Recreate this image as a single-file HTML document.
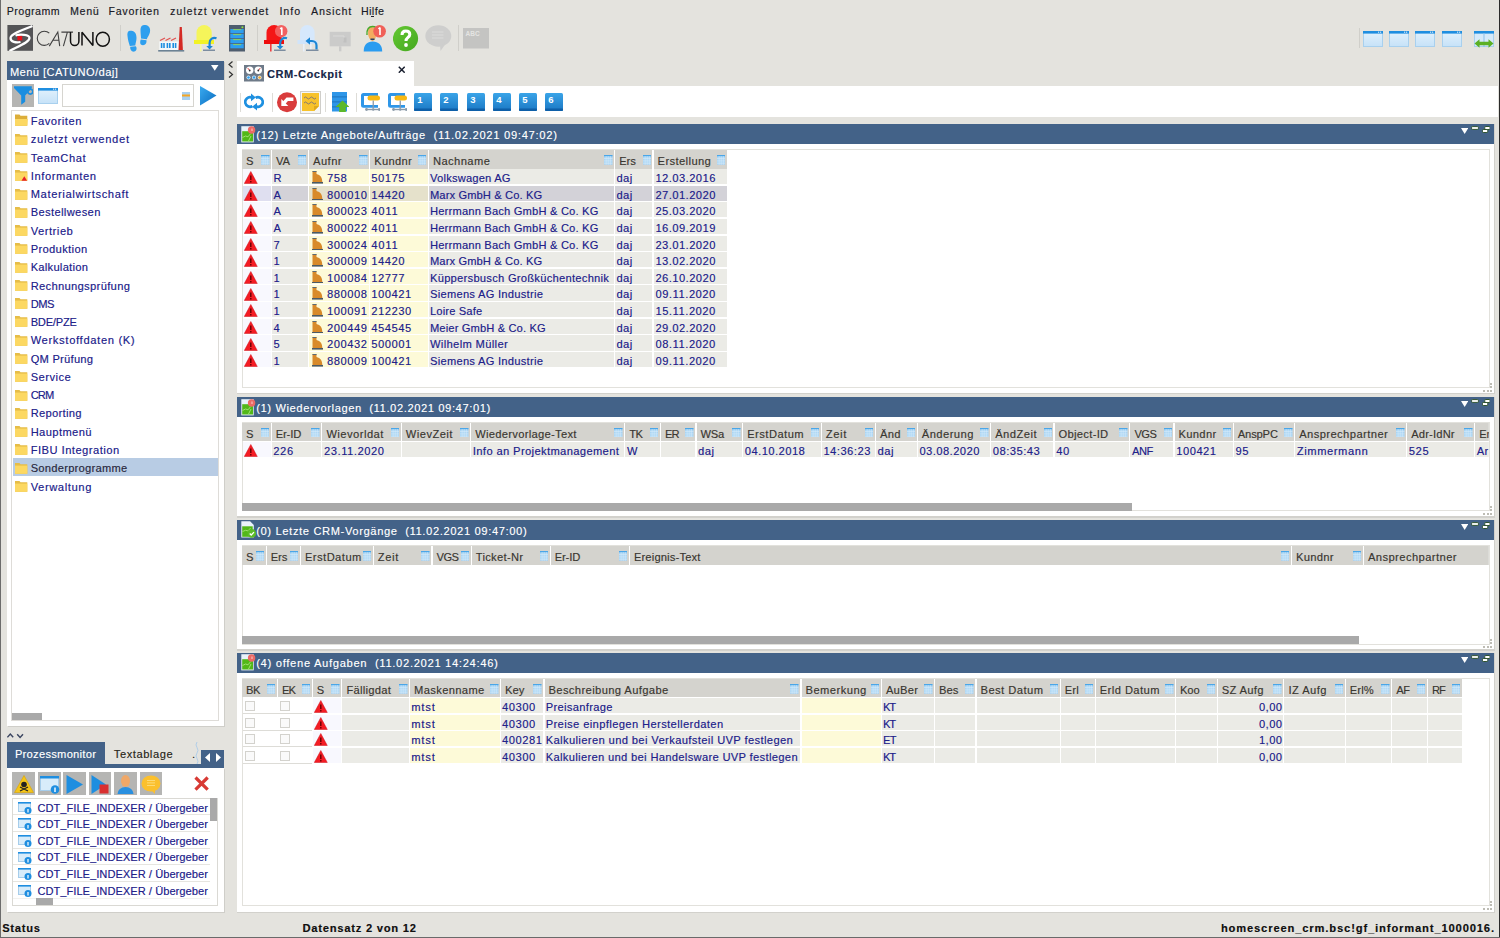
<!DOCTYPE html>
<html><head><meta charset="utf-8"><style>
html,body{margin:0;padding:0;}
body{width:1500px;height:938px;overflow:hidden;position:relative;background:#e4e3de;font-family:'Liberation Sans', sans-serif;}
div,svg{position:absolute;}
.t{white-space:pre;line-height:14px;}
</style></head><body>
<div style="left:0.00px;top:0.00px;width:1.00px;height:938.00px;background:#6c6c6c;"></div>
<div style="left:1499.00px;top:0.00px;width:1.00px;height:938.00px;background:#2a2a2a;"></div>
<div style="left:0.00px;top:937.00px;width:1500.00px;height:1.00px;background:#6a6a6a;"></div>
<div class="t" style="top:4px;font-size:10.5px;color:#1c1c28;letter-spacing:0.533px;left:6.70px;text-shadow:0.4px 0 0 rgba(28,28,40,0.4);">Programm</div>
<div class="t" style="top:4px;font-size:10.5px;color:#1c1c28;letter-spacing:0.782px;left:70.10px;text-shadow:0.4px 0 0 rgba(28,28,40,0.4);">Menü</div>
<div class="t" style="top:4px;font-size:10.5px;color:#1c1c28;letter-spacing:0.839px;left:108.40px;text-shadow:0.4px 0 0 rgba(28,28,40,0.4);">Favoriten</div>
<div class="t" style="top:4px;font-size:10.5px;color:#1c1c28;letter-spacing:1.030px;left:170.10px;text-shadow:0.4px 0 0 rgba(28,28,40,0.4);">zuletzt verwendet</div>
<div class="t" style="top:4px;font-size:10.5px;color:#1c1c28;letter-spacing:1.025px;left:279.40px;text-shadow:0.4px 0 0 rgba(28,28,40,0.4);">Info</div>
<div class="t" style="top:4px;font-size:10.5px;color:#1c1c28;letter-spacing:0.949px;left:311.10px;text-shadow:0.4px 0 0 rgba(28,28,40,0.4);">Ansicht</div>
<div class="t" style="top:4px;font-size:10.5px;color:#1c1c28;letter-spacing:0.510px;left:360.90px;text-shadow:0.4px 0 0 rgba(28,28,40,0.4);">Hilfe</div>
<div style="left:371.30px;top:15.80px;width:2.40px;height:0.90px;background:#1c1c28;"></div>
<svg style="left:7.00px;top:25.00px" width="27" height="26" viewBox="0 0 27 26"><rect x="0.4" y="0" width="25.6" height="25.8" fill="#555557"/>
<path d="M25.5 1 C 15 5, 3.5 9, 3.5 13 C 3.5 17, 9 18, 13.5 17" stroke="#fff" stroke-width="2.3" fill="none"/>
<path d="M8.5 10.5 C 13 9, 22.5 9.5, 22.5 13 C 22.5 17, 12 21, 2.5 26" stroke="#fff" stroke-width="2.3" fill="none"/>
<rect x="10.4" y="11" width="4.8" height="4.4" fill="#e8101a"/></svg>
<svg style="left:35.00px;top:29.80px" width="76" height="18" viewBox="0 0 76 18">
<path d="M14.3 3.2 A 7.1 7.1 0 1 0 14.3 13.4" stroke="#404040" stroke-width="1.1" fill="none"/>
<path d="M14.3 16.1 L22.8 2 L24.7 16.1 M18.2 10.2 L23.6 10.2" stroke="#404040" stroke-width="1.1" fill="none"/>
<path d="M26.4 2.1 L38 2.1 M32.4 2.1 L28.4 16.1" stroke="#404040" stroke-width="1.1" fill="none"/>
<path d="M35.5 2 L35.5 11 A 4.2 4.6 0 0 0 43.9 11 L43.9 2" stroke="#111" stroke-width="1.5" fill="none"/>
<path d="M47 15.6 L47 2.3 L57.9 15.6 L57.9 2" stroke="#111" stroke-width="1.5" fill="none" stroke-linejoin="bevel"/>
<ellipse cx="67.8" cy="9.2" rx="6.6" ry="7" stroke="#111" stroke-width="1.5" fill="none"/></svg>
<div style="left:120.00px;top:25.00px;width:1.00px;height:26.00px;background:#d0cfca;"></div>
<svg style="left:126.00px;top:24.00px" width="25" height="28" viewBox="0 0 25 28"><path d="M1.5 12 C 1 7, 3 6.5, 5.5 6.8 C 9 7.2, 10.5 10, 10.5 14 C 10.5 17, 9.5 19, 9.3 21.5 L 3.8 22 C 3 19, 1.8 16, 1.5 12Z" fill="#2e9fee"/>
<path d="M4.2 22.8 L 9.8 22.3 C 11 23.5, 11 26.5, 8.5 27.5 C 5.5 28.2, 4 26, 4.2 22.8Z" fill="#2e9fee"/>
<path d="M14.5 6 C 14.5 2, 16.5 0.8, 19.5 1 C 23 1.5, 24.5 4, 24 8 C 23.5 11, 21.5 13, 20.8 15.2 L 15 14.6 C 15 12, 14.5 9.5, 14.5 6Z" fill="#2e9fee"/>
<path d="M14.8 15.5 L 20.5 16.2 C 20.8 19, 19.5 21, 17 21.2 C 14.2 21.3, 13.5 18.5, 14.8 15.5Z" fill="#2e9fee"/></svg>
<svg style="left:158.00px;top:26.00px" width="27" height="26" viewBox="0 0 27 26"><rect x="1.3" y="15.5" width="19.5" height="8.5" fill="#f6f8fa"/>
<path d="M2 14.5 l5 -2.5 M7.5 14.5 l5 -2.5 M13 14.5 l5 -2.5" stroke="#e05050" stroke-width="1.2"/>
<rect x="2.8" y="17" width="1.6" height="5" fill="#1e8ee0"/><rect x="5.2" y="17" width="1.6" height="5" fill="#1e8ee0"/>
<rect x="8.6" y="17" width="1.6" height="5" fill="#1e8ee0"/><rect x="11" y="17" width="1.6" height="5" fill="#1e8ee0"/>
<rect x="14.4" y="17" width="1.6" height="5" fill="#1e8ee0"/><rect x="16.8" y="17" width="1.6" height="5" fill="#1e8ee0"/>
<path d="M20.5 24 L21.7 1 H23.8 L24.9 24z" fill="#d42a24"/><rect x="0.2" y="24" width="26" height="1.6" fill="#6c8294"/></svg>
<svg style="left:194.00px;top:25.00px" width="24" height="27" viewBox="0 0 24 27"><path d="M2.5 15 V 7.5 A 7.6 7.5 0 0 1 17.7 7.5 V 15z" fill="#f5f55a"/><rect x="0" y="15" width="20" height="4" fill="#f2f224"/><rect x="6" y="19" width="1.6" height="7.5" fill="#f8f8a0"/><path d="M15.6 22.5 V 18 A 5 5 0 0 1 22.5 13.2" stroke="#1b86d6" stroke-width="2.2" fill="none"/><path d="M12.3 21 h6.6 l-3.3 3.6z" fill="#1b86d6"/><rect x="9" y="24.5" width="12" height="1.5" fill="#7c8da0"/></svg>
<svg style="left:229.00px;top:25.00px" width="16" height="27" viewBox="0 0 16 27"><rect width="16" height="26.5" fill="#4e5d6e"/><rect x="1.3" y="4" width="13.4" height="4.3" fill="#2d9ef0"/><rect x="1.3" y="9" width="13.4" height="4.3" fill="#2d9ef0"/><rect x="1.3" y="14" width="13.4" height="4.3" fill="#2d9ef0"/><rect x="1.3" y="19" width="13.4" height="4.3" fill="#2d9ef0"/>
<rect x="4.2" y="4.2" width="8" height="0.9" fill="#9ad84a"/><rect x="4.2" y="9.2" width="8" height="0.9" fill="#9ad84a"/><rect x="4.2" y="14.2" width="8" height="0.9" fill="#9ad84a"/><rect x="4.2" y="19.2" width="8" height="0.9" fill="#9ad84a"/><circle cx="13.4" cy="2.3" r="1" fill="#8ee040"/></svg>
<div style="left:257.00px;top:25.00px;width:1.00px;height:26.00px;background:#d0cfca;"></div>
<svg style="left:264.00px;top:25.00px" width="25" height="27" viewBox="0 0 25 27"><path d="M2.5 15 V 7.5 A 7.6 7.5 0 0 1 17.7 7.5 V 15z" fill="#f41616"/><rect x="0" y="15" width="20" height="4" fill="#ee0c0c"/><rect x="6" y="19" width="1.6" height="7.5" fill="#f04040"/><circle cx="17.2" cy="6.2" r="6.2" fill="#f26060"/><path d="M17.8 2.5 v7.5 M16.2 4 l1.6 -1.5" stroke="#fff" stroke-width="1.6" fill="none"/>
<path d="M16.2 22.5 V 18 A 5 5 0 0 1 23 13.2" stroke="#1b86d6" stroke-width="2.2" fill="none"/><path d="M12.8 21 h6.6 l-3.3 3.6z" fill="#1b86d6"/><rect x="10" y="24.5" width="11.6" height="1.5" fill="#7c8da0"/></svg>
<svg style="left:297.00px;top:25.00px" width="22" height="27" viewBox="0 0 22 27"><path d="M3 15 V 7.5 A 7.3 7.5 0 0 1 17.6 7.5 V 15z" fill="#d6e8fc"/><rect x="0.5" y="15" width="20" height="4" fill="#d0e4fa"/><rect x="6" y="19" width="1.6" height="7.5" fill="#e8f0fa"/><rect x="13" y="19" width="1.6" height="6" fill="#e8f0fa"/>
<path d="M19.5 24.5 V 20.5 A 4.5 4.5 0 0 0 15 16 H 12" stroke="#1b86d6" stroke-width="2.2" fill="none"/><path d="M8.5 16 l4.5 -3.8 v7.6z" fill="#1b86d6"/><rect x="9" y="24.5" width="12.5" height="1.5" fill="#7c8da0"/></svg>
<svg style="left:329.00px;top:25.00px" width="23" height="27" viewBox="0 0 23 27"><rect x="0.7" y="6.8" width="21" height="14.5" fill="#cbcbca"/><rect x="10" y="21.3" width="2.4" height="5" fill="#cbcbca"/><path d="M4 11 h11 v5" stroke="#dadad9" stroke-width="1" fill="none"/><rect x="14.5" y="12.5" width="3" height="5" fill="#c0c0bf"/></svg>
<svg style="left:363.00px;top:25.00px" width="24" height="27" viewBox="0 0 24 27"><path d="M0.7 26.4 C 0.7 20, 4 16.6, 9.7 16.6 C 15.4 16.6, 19.2 20, 19.2 26.4z" fill="#2a9cf0"/><path d="M5 8 C 5 3, 7 2, 9 2 C 12 2, 13.5 4, 13.5 8 C 13.5 12, 12 15, 9.5 16.3 C 7 15, 5 12, 5 8Z" fill="#f2ac60"/>
<path d="M4 10 C 3.5 4, 6 1.5, 9.5 1.5 C 12 1.5, 14 3, 14.5 5" stroke="#48a828" stroke-width="1.4" fill="none"/><rect x="7.5" y="13.5" width="4" height="1.5" fill="#2a4060"/>
<circle cx="16.6" cy="6.3" r="6.3" fill="#f06058"/><path d="M17 2.5 v7.5 M15.5 4 l1.5 -1.5" stroke="#fff" stroke-width="1.6" fill="none"/></svg>
<svg style="left:393.00px;top:25.00px" width="26" height="27" viewBox="0 0 26 27"><defs><linearGradient id="gq" x1="0" y1="0" x2="1" y2="1"><stop offset="0" stop-color="#64c832"/><stop offset="1" stop-color="#45a820"/></linearGradient></defs><circle cx="12.5" cy="13.6" r="12.6" fill="url(#gq)"/>
<path d="M9 10 C 9 7, 10.5 6, 12.8 6 C 15.3 6, 16.8 7.3, 16.8 9.5 C 16.8 12.5, 13 12.5, 13 16" stroke="#fff" stroke-width="3" fill="none"/><circle cx="13" cy="20" r="1.9" fill="#fff"/></svg>
<svg style="left:425.00px;top:25.00px" width="27" height="27" viewBox="0 0 27 27"><ellipse cx="13.3" cy="11" rx="13" ry="10.7" fill="#cececd"/><path d="M15 20 L 15.5 26 L 22 17z" fill="#cececd"/><rect x="7" y="6.5" width="11.5" height="1" fill="#dcdcdb"/><rect x="7" y="9.5" width="11.5" height="1" fill="#dcdcdb"/><rect x="7" y="12.5" width="11.5" height="1" fill="#dcdcdb"/></svg>
<div style="left:458.30px;top:25.00px;width:1.00px;height:26.00px;background:#d0cfca;"></div>
<svg style="left:463.00px;top:28.00px" width="26" height="21" viewBox="0 0 26 21"><rect width="26" height="20.5" fill="#c4c4c2"/><text x="2.5" y="8.3" font-size="6.5" fill="#e4e4e2" font-family="Liberation Sans" font-weight="bold">ABC</text></svg>
<div style="left:1358.50px;top:28.00px;width:1.00px;height:20.00px;background:#d0cfca;"></div>
<svg style="left:1363.00px;top:30.50px" width="20" height="16" viewBox="0 0 20 16"><defs><linearGradient id="wg" x1="0" y1="0" x2="0" y2="1"><stop offset="0" stop-color="#e2f1fc"/><stop offset="1" stop-color="#c6e2f8"/></linearGradient></defs><rect x="0.5" y="0.5" width="19" height="15" fill="url(#wg)" stroke="#a8d0ee"/><rect x="0" y="0" width="20" height="2.6" fill="#1f8ee0"/><rect x="15" y="0.6" width="1.2" height="1.2" fill="#cfe6f8"/><rect x="17" y="0.6" width="1.2" height="1.2" fill="#cfe6f8"/></svg>
<svg style="left:1389.00px;top:30.50px" width="20" height="16" viewBox="0 0 20 16"><defs><linearGradient id="wg" x1="0" y1="0" x2="0" y2="1"><stop offset="0" stop-color="#e2f1fc"/><stop offset="1" stop-color="#c6e2f8"/></linearGradient></defs><rect x="0.5" y="0.5" width="19" height="15" fill="url(#wg)" stroke="#a8d0ee"/><rect x="0" y="0" width="20" height="2.6" fill="#1f8ee0"/><rect x="15" y="0.6" width="1.2" height="1.2" fill="#cfe6f8"/><rect x="17" y="0.6" width="1.2" height="1.2" fill="#cfe6f8"/></svg>
<svg style="left:1415.00px;top:30.50px" width="20" height="16" viewBox="0 0 20 16"><defs><linearGradient id="wg" x1="0" y1="0" x2="0" y2="1"><stop offset="0" stop-color="#e2f1fc"/><stop offset="1" stop-color="#c6e2f8"/></linearGradient></defs><rect x="0.5" y="0.5" width="19" height="15" fill="url(#wg)" stroke="#a8d0ee"/><rect x="0" y="0" width="20" height="2.6" fill="#1f8ee0"/><rect x="15" y="0.6" width="1.2" height="1.2" fill="#cfe6f8"/><rect x="17" y="0.6" width="1.2" height="1.2" fill="#cfe6f8"/></svg>
<svg style="left:1442.00px;top:30.50px" width="20" height="16" viewBox="0 0 20 16"><defs><linearGradient id="wg" x1="0" y1="0" x2="0" y2="1"><stop offset="0" stop-color="#e2f1fc"/><stop offset="1" stop-color="#c6e2f8"/></linearGradient></defs><rect x="0.5" y="0.5" width="19" height="15" fill="url(#wg)" stroke="#a8d0ee"/><rect x="0" y="0" width="20" height="2.6" fill="#1f8ee0"/><rect x="15" y="0.6" width="1.2" height="1.2" fill="#cfe6f8"/><rect x="17" y="0.6" width="1.2" height="1.2" fill="#cfe6f8"/></svg>
<svg style="left:1474.00px;top:30.50px" width="20" height="18" viewBox="0 0 20 18"><rect x="0.5" y="0.5" width="19" height="15" fill="#d6eafa" stroke="#a8d0ee"/><rect x="0" y="0" width="20" height="2.6" fill="#1f8ee0"/><rect x="9.5" y="2" width="1" height="14" fill="#8cc0ea"/>
<path d="M0.5 12.5 l5 -4.3 v2.6 h9 v-2.6 l5 4.3 l-5 4.3 v-2.6 h-9 v2.6z" fill="#5bb025"/></svg>
<div style="left:7.00px;top:61.00px;width:217.00px;height:665.00px;background:#fff;box-shadow:1px 1px 0 #cfcec9;"></div>
<div style="left:7.00px;top:61.00px;width:217.00px;height:19.00px;background:#436288;"></div>
<div class="t" style="top:65px;font-size:11px;color:#fff;letter-spacing:0.488px;left:9.90px;text-shadow:0.4px 0 0 rgba(255,255,255,0.4);">Menü [CATUNO/daj]</div>
<svg style="left:211.00px;top:65.00px" width="8" height="6" viewBox="0 0 8 6"><path d="M0 0 h7.5 l-3.75 5.7z" fill="#fff"/></svg>
<div style="left:12.00px;top:84.00px;width:22.00px;height:23.00px;background:#b5b5b3;"></div>
<svg style="left:14.00px;top:86.00px" width="19" height="19" viewBox="0 0 19 19"><path d="M0 0.3 H17.8 V2 L11.2 9.5 V15.8 L7.2 18.8 V9.5 L0 2z" fill="#1a8ee0"/><circle cx="16.3" cy="5.6" r="2.5" stroke="#1a8ee0" stroke-width="1.6" fill="none"/></svg>
<svg style="left:38.20px;top:88.00px" width="20" height="16" viewBox="0 0 20 16"><defs><linearGradient id="wg" x1="0" y1="0" x2="0" y2="1"><stop offset="0" stop-color="#e2f1fc"/><stop offset="1" stop-color="#c6e2f8"/></linearGradient></defs><rect x="0.5" y="0.5" width="19" height="15" fill="url(#wg)" stroke="#a8d0ee"/><rect x="0" y="0" width="20" height="2.6" fill="#1f8ee0"/><rect x="15" y="0.6" width="1.2" height="1.2" fill="#cfe6f8"/><rect x="17" y="0.6" width="1.2" height="1.2" fill="#cfe6f8"/></svg>
<div style="left:62.00px;top:84.00px;width:131.50px;height:22.70px;background:#fff;box-shadow: inset 0 0 0 1px #d6d5d0;"></div>
<svg style="left:182.00px;top:91.50px" width="8" height="8.5" viewBox="0 0 8 8.5"><rect width="8" height="8.5" fill="#a8d0f0"/><rect y="2.5" width="8" height="2" fill="#f5a623"/></svg>
<svg style="left:199.50px;top:86.00px" width="17" height="20" viewBox="0 0 17 20"><defs><linearGradient id="pg" x1="0" y1="0" x2="1" y2="1"><stop offset="0" stop-color="#3aabf0"/><stop offset="1" stop-color="#0a6cc0"/></linearGradient></defs><path d="M0 0 L16.5 9.5 L0 19.5z" fill="url(#pg)"/></svg>
<div style="left:11.00px;top:110.00px;width:208.00px;height:611.00px;background:#fff;box-shadow: inset 0 0 0 1px #dedcd8;"></div>
<svg style="left:15.00px;top:114.40px" width="13" height="12" viewBox="0 0 13 12"><path d="M0 0.5 h4.5 l1 1.3 h6.8 v10 h-12.3z" fill="#dcae3a"/><path d="M0 5 h12.8 l-0.6 6.8 h-12.2z" fill="#fcd862"/></svg>
<div class="t" style="top:114.0px;font-size:11px;color:#22228a;letter-spacing:0.594px;left:30.70px;text-shadow:0.4px 0 0 rgba(34,34,138,0.4);">Favoriten</div>
<svg style="left:15.00px;top:132.68px" width="13" height="12" viewBox="0 0 13 12"><path d="M0 1 h4.5 l1 1.3 h6.8 v9.5 h-12.3z" fill="#e6bd48"/><path d="M0 3.6 h12.3 v8.2 h-12.3z" fill="#fcd862"/></svg>
<div class="t" style="top:132.28px;font-size:11px;color:#22228a;letter-spacing:0.794px;left:30.70px;text-shadow:0.4px 0 0 rgba(34,34,138,0.4);">zuletzt verwendet</div>
<svg style="left:15.00px;top:150.96px" width="13" height="12" viewBox="0 0 13 12"><path d="M0 1 h4.5 l1 1.3 h6.8 v9.5 h-12.3z" fill="#e6bd48"/><path d="M0 3.6 h12.3 v8.2 h-12.3z" fill="#fcd862"/></svg>
<div class="t" style="top:150.56px;font-size:11px;color:#22228a;letter-spacing:0.676px;left:30.70px;text-shadow:0.4px 0 0 rgba(34,34,138,0.4);">TeamChat</div>
<svg style="left:15.00px;top:169.24px" width="13" height="12" viewBox="0 0 13 12"><path d="M0 1 h4.5 l1 1.3 h6.8 v9.5 h-12.3z" fill="#e6bd48"/><path d="M0 3.6 h12.3 v8.2 h-12.3z" fill="#fcd862"/><path d="M6.5 11.8 l2.8 -4.5 l2.8 4.5z" fill="#e8202a"/></svg>
<div class="t" style="top:168.84px;font-size:11px;color:#22228a;letter-spacing:0.658px;left:30.70px;text-shadow:0.4px 0 0 rgba(34,34,138,0.4);">Informanten</div>
<svg style="left:15.00px;top:187.52px" width="13" height="12" viewBox="0 0 13 12"><path d="M0 1 h4.5 l1 1.3 h6.8 v9.5 h-12.3z" fill="#e6bd48"/><path d="M0 3.6 h12.3 v8.2 h-12.3z" fill="#fcd862"/></svg>
<div class="t" style="top:187.12px;font-size:11px;color:#22228a;letter-spacing:0.710px;left:30.70px;text-shadow:0.4px 0 0 rgba(34,34,138,0.4);">Materialwirtschaft</div>
<svg style="left:15.00px;top:205.80px" width="13" height="12" viewBox="0 0 13 12"><path d="M0 1 h4.5 l1 1.3 h6.8 v9.5 h-12.3z" fill="#e6bd48"/><path d="M0 3.6 h12.3 v8.2 h-12.3z" fill="#fcd862"/></svg>
<div class="t" style="top:205.4px;font-size:11px;color:#22228a;letter-spacing:0.434px;left:30.70px;text-shadow:0.4px 0 0 rgba(34,34,138,0.4);">Bestellwesen</div>
<svg style="left:15.00px;top:224.08px" width="13" height="12" viewBox="0 0 13 12"><path d="M0 1 h4.5 l1 1.3 h6.8 v9.5 h-12.3z" fill="#e6bd48"/><path d="M0 3.6 h12.3 v8.2 h-12.3z" fill="#fcd862"/></svg>
<div class="t" style="top:223.68px;font-size:11px;color:#22228a;letter-spacing:0.586px;left:30.70px;text-shadow:0.4px 0 0 rgba(34,34,138,0.4);">Vertrieb</div>
<svg style="left:15.00px;top:242.36px" width="13" height="12" viewBox="0 0 13 12"><path d="M0 1 h4.5 l1 1.3 h6.8 v9.5 h-12.3z" fill="#e6bd48"/><path d="M0 3.6 h12.3 v8.2 h-12.3z" fill="#fcd862"/></svg>
<div class="t" style="top:241.96px;font-size:11px;color:#22228a;letter-spacing:0.423px;left:30.70px;text-shadow:0.4px 0 0 rgba(34,34,138,0.4);">Produktion</div>
<svg style="left:15.00px;top:260.64px" width="13" height="12" viewBox="0 0 13 12"><path d="M0 1 h4.5 l1 1.3 h6.8 v9.5 h-12.3z" fill="#e6bd48"/><path d="M0 3.6 h12.3 v8.2 h-12.3z" fill="#fcd862"/></svg>
<div class="t" style="top:260.24px;font-size:11px;color:#22228a;letter-spacing:0.332px;left:30.70px;text-shadow:0.4px 0 0 rgba(34,34,138,0.4);">Kalkulation</div>
<svg style="left:15.00px;top:278.92px" width="13" height="12" viewBox="0 0 13 12"><path d="M0 1 h4.5 l1 1.3 h6.8 v9.5 h-12.3z" fill="#e6bd48"/><path d="M0 3.6 h12.3 v8.2 h-12.3z" fill="#fcd862"/></svg>
<div class="t" style="top:278.52px;font-size:11px;color:#22228a;letter-spacing:0.410px;left:30.70px;text-shadow:0.4px 0 0 rgba(34,34,138,0.4);">Rechnungsprüfung</div>
<svg style="left:15.00px;top:297.20px" width="13" height="12" viewBox="0 0 13 12"><path d="M0 1 h4.5 l1 1.3 h6.8 v9.5 h-12.3z" fill="#e6bd48"/><path d="M0 3.6 h12.3 v8.2 h-12.3z" fill="#fcd862"/></svg>
<div class="t" style="top:296.8px;font-size:11px;color:#22228a;letter-spacing:-0.338px;left:30.70px;text-shadow:0.4px 0 0 rgba(34,34,138,0.4);">DMS</div>
<svg style="left:15.00px;top:315.48px" width="13" height="12" viewBox="0 0 13 12"><path d="M0 1 h4.5 l1 1.3 h6.8 v9.5 h-12.3z" fill="#e6bd48"/><path d="M0 3.6 h12.3 v8.2 h-12.3z" fill="#fcd862"/></svg>
<div class="t" style="top:315.08000000000004px;font-size:11px;color:#22228a;letter-spacing:-0.164px;left:30.70px;text-shadow:0.4px 0 0 rgba(34,34,138,0.4);">BDE/PZE</div>
<svg style="left:15.00px;top:333.76px" width="13" height="12" viewBox="0 0 13 12"><path d="M0 1 h4.5 l1 1.3 h6.8 v9.5 h-12.3z" fill="#e6bd48"/><path d="M0 3.6 h12.3 v8.2 h-12.3z" fill="#fcd862"/></svg>
<div class="t" style="top:333.36px;font-size:11px;color:#22228a;letter-spacing:0.738px;left:30.70px;text-shadow:0.4px 0 0 rgba(34,34,138,0.4);">Werkstoffdaten (K)</div>
<svg style="left:15.00px;top:352.04px" width="13" height="12" viewBox="0 0 13 12"><path d="M0 1 h4.5 l1 1.3 h6.8 v9.5 h-12.3z" fill="#e6bd48"/><path d="M0 3.6 h12.3 v8.2 h-12.3z" fill="#fcd862"/></svg>
<div class="t" style="top:351.64px;font-size:11px;color:#22228a;letter-spacing:0.326px;left:30.70px;text-shadow:0.4px 0 0 rgba(34,34,138,0.4);">QM Prüfung</div>
<svg style="left:15.00px;top:370.32px" width="13" height="12" viewBox="0 0 13 12"><path d="M0 1 h4.5 l1 1.3 h6.8 v9.5 h-12.3z" fill="#e6bd48"/><path d="M0 3.6 h12.3 v8.2 h-12.3z" fill="#fcd862"/></svg>
<div class="t" style="top:369.92px;font-size:11px;color:#22228a;letter-spacing:0.542px;left:30.70px;text-shadow:0.4px 0 0 rgba(34,34,138,0.4);">Service</div>
<svg style="left:15.00px;top:388.60px" width="13" height="12" viewBox="0 0 13 12"><path d="M0 1 h4.5 l1 1.3 h6.8 v9.5 h-12.3z" fill="#e6bd48"/><path d="M0 3.6 h12.3 v8.2 h-12.3z" fill="#fcd862"/></svg>
<div class="t" style="top:388.20000000000005px;font-size:11px;color:#22228a;letter-spacing:-0.780px;left:30.70px;text-shadow:0.4px 0 0 rgba(34,34,138,0.4);">CRM</div>
<svg style="left:15.00px;top:406.88px" width="13" height="12" viewBox="0 0 13 12"><path d="M0 1 h4.5 l1 1.3 h6.8 v9.5 h-12.3z" fill="#e6bd48"/><path d="M0 3.6 h12.3 v8.2 h-12.3z" fill="#fcd862"/></svg>
<div class="t" style="top:406.48px;font-size:11px;color:#22228a;letter-spacing:0.377px;left:30.70px;text-shadow:0.4px 0 0 rgba(34,34,138,0.4);">Reporting</div>
<svg style="left:15.00px;top:425.16px" width="13" height="12" viewBox="0 0 13 12"><path d="M0 1 h4.5 l1 1.3 h6.8 v9.5 h-12.3z" fill="#e6bd48"/><path d="M0 3.6 h12.3 v8.2 h-12.3z" fill="#fcd862"/></svg>
<div class="t" style="top:424.76px;font-size:11px;color:#22228a;letter-spacing:0.475px;left:30.70px;text-shadow:0.4px 0 0 rgba(34,34,138,0.4);">Hauptmenü</div>
<svg style="left:15.00px;top:443.44px" width="13" height="12" viewBox="0 0 13 12"><path d="M0 1 h4.5 l1 1.3 h6.8 v9.5 h-12.3z" fill="#e6bd48"/><path d="M0 3.6 h12.3 v8.2 h-12.3z" fill="#fcd862"/></svg>
<div class="t" style="top:443.04px;font-size:11px;color:#22228a;letter-spacing:0.549px;left:30.70px;text-shadow:0.4px 0 0 rgba(34,34,138,0.4);">FIBU Integration</div>
<div style="left:12.50px;top:458.22px;width:205.50px;height:17.70px;background:#b8cce4;"></div>
<svg style="left:15.00px;top:461.72px" width="13" height="12" viewBox="0 0 13 12"><path d="M0 1 h4.5 l1 1.3 h6.8 v9.5 h-12.3z" fill="#e6bd48"/><path d="M0 3.6 h12.3 v8.2 h-12.3z" fill="#fcd862"/></svg>
<div class="t" style="top:461.32000000000005px;font-size:11px;color:#2a2a40;letter-spacing:0.331px;left:30.70px;text-shadow:0.4px 0 0 rgba(42,42,64,0.4);">Sonderprogramme</div>
<svg style="left:15.00px;top:480.00px" width="13" height="12" viewBox="0 0 13 12"><path d="M0 1 h4.5 l1 1.3 h6.8 v9.5 h-12.3z" fill="#e6bd48"/><path d="M0 3.6 h12.3 v8.2 h-12.3z" fill="#fcd862"/></svg>
<div class="t" style="top:479.6px;font-size:11px;color:#22228a;letter-spacing:0.682px;left:30.70px;text-shadow:0.4px 0 0 rgba(34,34,138,0.4);">Verwaltung</div>
<div style="left:12.20px;top:713.20px;width:30.00px;height:7.00px;background:#a9a9a9;"></div>
<svg style="left:7.00px;top:732.00px" width="17" height="7" viewBox="0 0 17 7"><path d="M0.4 5.3 l2.9 -3.3 l2.9 3.3" stroke="#3a4560" stroke-width="1.4" fill="none"/><path d="M10.2 2.2 l2.9 3.3 l2.9 -3.3" stroke="#3a4560" stroke-width="1.4" fill="none"/></svg>
<div style="left:7.00px;top:768.00px;width:217.00px;height:144.00px;background:#fff;box-shadow:1px 1px 0 #cfcec9;"></div>
<div style="left:6.70px;top:741.80px;width:98.00px;height:26.20px;background:#436288;"></div>
<div style="left:7.00px;top:763.60px;width:217.00px;height:4.40px;background:#436288;"></div>
<div class="t" style="top:746.5px;font-size:11px;color:#fff;letter-spacing:0.355px;left:14.90px;text-shadow:0.4px 0 0 rgba(255,255,255,0.4);">Prozessmonitor</div>
<div class="t" style="top:747px;font-size:11px;color:#2b2820;letter-spacing:0.610px;left:113.80px;text-shadow:0.4px 0 0 rgba(43,40,32,0.4);">Textablage</div>
<div class="t" style="top:747px;font-size:11px;color:#2b2820;left:191.90px;text-shadow:0.4px 0 0 rgba(43,40,32,0.4);">.</div>
<svg style="left:195.00px;top:742.00px" width="4" height="22" viewBox="0 0 4 22"><path d="M2 0 q-2 3 0 5.5 q2 3 0 5.5 q-2 3 0 5.5 q2 3 0 5.5" stroke="#9ac4ec" stroke-width="0.7" fill="none"/></svg>
<div style="left:201.00px;top:750.00px;width:23.00px;height:18.00px;background:#436288;"></div>
<svg style="left:204.50px;top:753.00px" width="17" height="9" viewBox="0 0 17 9"><path d="M0 4.5 l5 -4.5 v9z" fill="#fff"/><path d="M16 4.5 l-5 -4.5 v9z" fill="#fff"/></svg>
<div style="left:12.20px;top:772.00px;width:22.50px;height:23.00px;background:#b5b5b3;"></div>
<div style="left:38.10px;top:772.00px;width:22.50px;height:23.00px;background:#b5b5b3;"></div>
<div style="left:63.00px;top:772.00px;width:22.50px;height:23.00px;background:#b5b5b3;"></div>
<div style="left:88.70px;top:772.00px;width:22.50px;height:23.00px;background:#b5b5b3;"></div>
<div style="left:114.10px;top:772.00px;width:22.50px;height:23.00px;background:#b5b5b3;"></div>
<div style="left:139.50px;top:772.00px;width:22.50px;height:23.00px;background:#b5b5b3;"></div>
<svg style="left:13.50px;top:775.00px" width="20" height="18" viewBox="0 0 20 18"><path d="M10 0.5 L19.5 17.5 H0.5z" fill="#f5c518" stroke="#d9a300" stroke-width="0.6"/><circle cx="10" cy="9.5" r="2.8" fill="#222"/><path d="M6 12 l8 4 M14 12 l-8 4" stroke="#222" stroke-width="1.2"/></svg>
<svg style="left:39.50px;top:775.50px" width="20" height="18" viewBox="0 0 20 18"><rect x="0.5" y="0.5" width="18" height="14" fill="#d8ecfa" stroke="#a6cdeb"/><rect width="19" height="2.5" fill="#1f8ee0"/><circle cx="15" cy="13.5" r="4.3" fill="#1e8ee0"/><rect x="14.3" y="11.5" width="1.4" height="4.5" fill="#fff"/></svg>
<svg style="left:66.00px;top:774.50px" width="18" height="19" viewBox="0 0 18 19"><path d="M0.5 0 L17 9.5 L0.5 19z" fill="#1e8ee0"/></svg>
<svg style="left:91.00px;top:774.50px" width="19" height="19" viewBox="0 0 19 19"><path d="M0.5 0 L15 9.5 L0.5 19z" fill="#1e8ee0"/><rect x="8.5" y="9.5" width="9" height="9" fill="#d93030"/></svg>
<svg style="left:117.00px;top:774.00px" width="17" height="20" viewBox="0 0 17 20"><ellipse cx="8.5" cy="7" rx="4.5" ry="6" fill="#f0a868"/><path d="M0.5 20 a8 7 0 0 1 16 0z" fill="#2a90e0"/></svg>
<svg style="left:141.00px;top:774.50px" width="20" height="19" viewBox="0 0 20 19"><ellipse cx="10" cy="8.5" rx="9.5" ry="8" fill="#fbc02d"/><path d="M10 15 l4 4 l0 -5z" fill="#fbc02d"/><rect x="6" y="5" width="8" height="0.8" fill="#fde28a"/><rect x="6" y="7.5" width="8" height="0.8" fill="#fde28a"/><rect x="6" y="10" width="8" height="0.8" fill="#fde28a"/></svg>
<svg style="left:193.80px;top:775.90px" width="15.2" height="15.2" viewBox="0 0 15.2 15.2"><path d="M1.5 1.5 L13.7 13.7 M13.7 1.5 L1.5 13.7" stroke="#d83a34" stroke-width="3.2"/></svg>
<div style="left:12.20px;top:797.70px;width:206.00px;height:108.00px;background:#fff;box-shadow: inset 0 0 0 1px #dad9d4;"></div>
<div style="left:0;top:0;width:1500px;height:938px;clip-path:inset(798.5px 1289.6px 39.60000000000002px 13px)">
<svg style="left:18.00px;top:801.80px" width="14" height="12" viewBox="0 0 14 12"><rect x="0.5" y="0.5" width="12" height="9" fill="#d8ecfa" stroke="#a6cdeb"/><rect width="13" height="1.6" fill="#1f8ee0"/><circle cx="10" cy="8.5" r="3.5" fill="#1e8ee0"/><rect x="9.4" y="7" width="1.2" height="3.5" fill="#fff"/></svg>
<div style="left:13.00px;top:814.30px;width:197.40px;height:1.00px;background:#e6e5e0;"></div>
<div class="t" style="top:800.5px;font-size:11px;color:#22228a;letter-spacing:0.085px;left:37.40px;text-shadow:0.4px 0 0 rgba(34,34,138,0.4);">CDT_FILE_INDEXER / Übergeber</div>
<svg style="left:18.00px;top:818.46px" width="14" height="12" viewBox="0 0 14 12"><rect x="0.5" y="0.5" width="12" height="9" fill="#d8ecfa" stroke="#a6cdeb"/><rect width="13" height="1.6" fill="#1f8ee0"/><circle cx="10" cy="8.5" r="3.5" fill="#1e8ee0"/><rect x="9.4" y="7" width="1.2" height="3.5" fill="#fff"/></svg>
<div style="left:13.00px;top:830.96px;width:197.40px;height:1.00px;background:#e6e5e0;"></div>
<div class="t" style="top:817.16px;font-size:11px;color:#22228a;letter-spacing:0.085px;left:37.40px;text-shadow:0.4px 0 0 rgba(34,34,138,0.4);">CDT_FILE_INDEXER / Übergeber</div>
<svg style="left:18.00px;top:835.12px" width="14" height="12" viewBox="0 0 14 12"><rect x="0.5" y="0.5" width="12" height="9" fill="#d8ecfa" stroke="#a6cdeb"/><rect width="13" height="1.6" fill="#1f8ee0"/><circle cx="10" cy="8.5" r="3.5" fill="#1e8ee0"/><rect x="9.4" y="7" width="1.2" height="3.5" fill="#fff"/></svg>
<div style="left:13.00px;top:847.62px;width:197.40px;height:1.00px;background:#e6e5e0;"></div>
<div class="t" style="top:833.82px;font-size:11px;color:#22228a;letter-spacing:0.085px;left:37.40px;text-shadow:0.4px 0 0 rgba(34,34,138,0.4);">CDT_FILE_INDEXER / Übergeber</div>
<svg style="left:18.00px;top:851.78px" width="14" height="12" viewBox="0 0 14 12"><rect x="0.5" y="0.5" width="12" height="9" fill="#d8ecfa" stroke="#a6cdeb"/><rect width="13" height="1.6" fill="#1f8ee0"/><circle cx="10" cy="8.5" r="3.5" fill="#1e8ee0"/><rect x="9.4" y="7" width="1.2" height="3.5" fill="#fff"/></svg>
<div style="left:13.00px;top:864.28px;width:197.40px;height:1.00px;background:#e6e5e0;"></div>
<div class="t" style="top:850.48px;font-size:11px;color:#22228a;letter-spacing:0.085px;left:37.40px;text-shadow:0.4px 0 0 rgba(34,34,138,0.4);">CDT_FILE_INDEXER / Übergeber</div>
<svg style="left:18.00px;top:868.44px" width="14" height="12" viewBox="0 0 14 12"><rect x="0.5" y="0.5" width="12" height="9" fill="#d8ecfa" stroke="#a6cdeb"/><rect width="13" height="1.6" fill="#1f8ee0"/><circle cx="10" cy="8.5" r="3.5" fill="#1e8ee0"/><rect x="9.4" y="7" width="1.2" height="3.5" fill="#fff"/></svg>
<div style="left:13.00px;top:880.94px;width:197.40px;height:1.00px;background:#e6e5e0;"></div>
<div class="t" style="top:867.14px;font-size:11px;color:#22228a;letter-spacing:0.085px;left:37.40px;text-shadow:0.4px 0 0 rgba(34,34,138,0.4);">CDT_FILE_INDEXER / Übergeber</div>
<svg style="left:18.00px;top:885.10px" width="14" height="12" viewBox="0 0 14 12"><rect x="0.5" y="0.5" width="12" height="9" fill="#d8ecfa" stroke="#a6cdeb"/><rect width="13" height="1.6" fill="#1f8ee0"/><circle cx="10" cy="8.5" r="3.5" fill="#1e8ee0"/><rect x="9.4" y="7" width="1.2" height="3.5" fill="#fff"/></svg>
<div style="left:13.00px;top:897.60px;width:197.40px;height:1.00px;background:#e6e5e0;"></div>
<div class="t" style="top:883.8px;font-size:11px;color:#22228a;letter-spacing:0.085px;left:37.40px;text-shadow:0.4px 0 0 rgba(34,34,138,0.4);">CDT_FILE_INDEXER / Übergeber</div>
</div>
<div style="left:210.40px;top:798.30px;width:6.70px;height:23.00px;background:#a9a9a9;"></div>
<div style="left:36.40px;top:898.20px;width:16.40px;height:7.00px;background:#a9a9a9;"></div>
<svg style="left:228.00px;top:61.00px" width="6" height="17" viewBox="0 0 6 17"><path d="M4.5 0.5 l-3.5 3 l3.5 3" stroke="#333" stroke-width="1.2" fill="none"/><path d="M1 10.5 l3.5 3 l-3.5 3" stroke="#333" stroke-width="1.2" fill="none"/></svg>
<div style="left:237.00px;top:61.00px;width:176.70px;height:25.00px;background:#fff;"></div>
<div style="left:237.00px;top:86.00px;width:1261.40px;height:31.00px;background:#fff;"></div>
<svg style="left:244.00px;top:65.00px" width="20" height="17" viewBox="0 0 20 17"><rect width="20" height="16.5" fill="#6e7a88"/><circle cx="5.7" cy="5.2" r="3.7" fill="#fff"/><circle cx="14.3" cy="5.2" r="3.7" fill="#fff"/><path d="M5.7 5.5 l-2 -2.5 M14.3 5.5 l2 -2.5" stroke="#d33" stroke-width="0.9"/><circle cx="5.7" cy="5.5" r="0.9" fill="#333"/><circle cx="14.3" cy="5.5" r="0.9" fill="#333"/><circle cx="4.5" cy="12.5" r="2" fill="#eaf4fc"/><circle cx="10" cy="12.5" r="2" fill="#eaf4fc"/><circle cx="15.6" cy="12.5" r="2" fill="#eaf4fc"/><circle cx="4.5" cy="12.5" r="1.3" fill="#2a9ef0"/><circle cx="10" cy="12.5" r="1.3" fill="#2a9ef0"/><circle cx="15.6" cy="12.5" r="1.3" fill="#f5a623"/></svg>
<div class="t" style="top:67px;font-size:11px;color:#1a2a4a;font-weight:700;letter-spacing:0.586px;left:266.90px;text-shadow:0.4px 0 0 rgba(26,42,74,0.4);">CRM-Cockpit</div>
<svg style="left:397.50px;top:65.50px" width="7.5" height="7.5" viewBox="0 0 7.5 7.5"><path d="M0.8 0.8 L6.7 6.7 M6.7 0.8 L0.8 6.7" stroke="#1a2030" stroke-width="1.5"/></svg>
<div style="left:239.50px;top:92.50px;width:1.00px;height:19.50px;background:#dddcd7;"></div>
<div style="left:272.40px;top:92.50px;width:1.00px;height:19.50px;background:#dddcd7;"></div>
<div style="left:299.60px;top:92.50px;width:1.00px;height:19.50px;background:#dddcd7;"></div>
<div style="left:325.00px;top:92.50px;width:1.00px;height:19.50px;background:#dddcd7;"></div>
<div style="left:356.00px;top:92.50px;width:1.00px;height:19.50px;background:#dddcd7;"></div>
<svg style="left:244.00px;top:93.00px" width="20" height="18.5" viewBox="0 0 20 18.5"><path d="M7.24 4.36 A 4.8 4.8 0 1 0 8.4 13.16" stroke="#1e90e0" stroke-width="2.7" fill="none"/><path d="M7 0.6 L11.8 4.4 L7 8.2z" fill="#1e90e0"/><path d="M12.76 13.64 A 4.8 4.8 0 1 0 11.6 4.84" stroke="#1e90e0" stroke-width="2.7" fill="none"/><path d="M13 9.8 L8.2 13.64 L13 17.5z" fill="#1e90e0"/></svg>
<svg style="left:277.00px;top:92.00px" width="20" height="20.5" viewBox="0 0 20 20.5"><circle cx="10" cy="10.25" r="10" fill="#d93c3c"/><path d="M6.8 11.2 L10.3 7.2 H16.4" stroke="#fff" stroke-width="3.4" fill="none"/><path d="M4.3 14 V7 L11.3 14z" fill="#fff"/></svg>
<div style="left:300.20px;top:90.50px;width:20.80px;height:23.30px;background:#f6f6f4;box-shadow: inset 0 0 0 1px #cfceca;"></div>
<svg style="left:302.00px;top:93.00px" width="17" height="18" viewBox="0 0 17 18"><path d="M0 0 h17 v13 l-5 5 h-12z" fill="#f7c22a"/><path d="M12 18 v-5 h5z" fill="#e0a818"/><path d="M2 5 q1.5 -2 3 0 t3 0 t3 0 t3 0 M2 10 q1.5 -2 3 0 t3 0 t3 0 t3 0" stroke="#3a4aa0" stroke-width="0.6" fill="none"/></svg>
<svg style="left:331.80px;top:92.30px" width="17.5" height="20" viewBox="0 0 17.5 20"><rect x="0" y="0" width="15" height="19.5" fill="#2e96e8"/><rect x="0" y="4.5" width="15" height="0.8" fill="#1a6ab0"/><rect x="0" y="9.5" width="15" height="0.8" fill="#1a6ab0"/><rect x="0" y="14.5" width="15" height="0.8" fill="#1a6ab0"/><path d="M10.5 8.5 l7 6.5 h-3.7 v5 h-6.6 v-5 h-3.7z" fill="#5cb82a"/></svg>
<svg style="left:361.30px;top:92.50px" width="19" height="19" viewBox="0 0 19 19"><path d="M2.5 0 H17 V3 H3 V12 H17 V14.8 H2.5 A2.5 2.5 0 0 1 0 12.3 V2.5 A2.5 2.5 0 0 1 2.5 0z" fill="#2e96e8"/><rect x="6.5" y="2.5" width="12.5" height="5" rx="2.5" fill="#f8b814"/><rect x="11.6" y="7.5" width="1.3" height="8" fill="#8a9aa8"/><path d="M5.5 16.5 h13" stroke="#8a9aa8" stroke-width="1.4"/><circle cx="5.5" cy="16.5" r="1.4" fill="#8a9aa8"/><circle cx="18.3" cy="16.5" r="1.4" fill="#8a9aa8"/><circle cx="12.2" cy="16.5" r="1.2" fill="#8a9aa8"/></svg>
<svg style="left:387.70px;top:92.50px" width="19" height="19.5" viewBox="0 0 19 19.5"><path d="M2.5 0 H17 V3 H3 V12 H17 V14.8 H2.5 A2.5 2.5 0 0 1 0 12.3 V2.5 A2.5 2.5 0 0 1 2.5 0z" fill="#2e96e8"/><rect x="6.5" y="2.5" width="12.5" height="5" rx="2.5" fill="#f8b814"/><rect x="11.6" y="7.5" width="1.3" height="8" fill="#8a9aa8"/><path d="M5.5 16.5 h13" stroke="#8a9aa8" stroke-width="1.4"/><circle cx="5.5" cy="16.5" r="1.4" fill="#8a9aa8"/><circle cx="18.3" cy="16.5" r="1.4" fill="#8a9aa8"/><circle cx="12.2" cy="16.5" r="1.2" fill="#8a9aa8"/></svg>
<svg style="left:414.00px;top:93.20px" width="18" height="18" viewBox="0 0 18 18"><defs><linearGradient id="bg0" x1="0" y1="0" x2="0" y2="1"><stop offset="0" stop-color="#3aa4e8"/><stop offset="1" stop-color="#1b78c4"/></linearGradient></defs><rect x="0" y="0" width="18" height="18" rx="1.5" fill="url(#bg0)"/><rect x="0" y="15.5" width="18" height="2.5" rx="1" fill="#0e5fa8"/><text x="6" y="10" font-size="9.5" font-weight="bold" fill="#fff" font-family="Liberation Sans" text-anchor="middle">1</text></svg>
<svg style="left:440.00px;top:93.20px" width="18" height="18" viewBox="0 0 18 18"><defs><linearGradient id="bg1" x1="0" y1="0" x2="0" y2="1"><stop offset="0" stop-color="#3aa4e8"/><stop offset="1" stop-color="#1b78c4"/></linearGradient></defs><rect x="0" y="0" width="18" height="18" rx="1.5" fill="url(#bg1)"/><rect x="0" y="15.5" width="18" height="2.5" rx="1" fill="#0e5fa8"/><text x="6" y="10" font-size="9.5" font-weight="bold" fill="#fff" font-family="Liberation Sans" text-anchor="middle">2</text></svg>
<svg style="left:466.50px;top:93.20px" width="18" height="18" viewBox="0 0 18 18"><defs><linearGradient id="bg2" x1="0" y1="0" x2="0" y2="1"><stop offset="0" stop-color="#3aa4e8"/><stop offset="1" stop-color="#1b78c4"/></linearGradient></defs><rect x="0" y="0" width="18" height="18" rx="1.5" fill="url(#bg2)"/><rect x="0" y="15.5" width="18" height="2.5" rx="1" fill="#0e5fa8"/><text x="6" y="10" font-size="9.5" font-weight="bold" fill="#fff" font-family="Liberation Sans" text-anchor="middle">3</text></svg>
<svg style="left:493.00px;top:93.20px" width="18" height="18" viewBox="0 0 18 18"><defs><linearGradient id="bg3" x1="0" y1="0" x2="0" y2="1"><stop offset="0" stop-color="#3aa4e8"/><stop offset="1" stop-color="#1b78c4"/></linearGradient></defs><rect x="0" y="0" width="18" height="18" rx="1.5" fill="url(#bg3)"/><rect x="0" y="15.5" width="18" height="2.5" rx="1" fill="#0e5fa8"/><text x="6" y="10" font-size="9.5" font-weight="bold" fill="#fff" font-family="Liberation Sans" text-anchor="middle">4</text></svg>
<svg style="left:519.00px;top:93.20px" width="18" height="18" viewBox="0 0 18 18"><defs><linearGradient id="bg4" x1="0" y1="0" x2="0" y2="1"><stop offset="0" stop-color="#3aa4e8"/><stop offset="1" stop-color="#1b78c4"/></linearGradient></defs><rect x="0" y="0" width="18" height="18" rx="1.5" fill="url(#bg4)"/><rect x="0" y="15.5" width="18" height="2.5" rx="1" fill="#0e5fa8"/><text x="6" y="10" font-size="9.5" font-weight="bold" fill="#fff" font-family="Liberation Sans" text-anchor="middle">5</text></svg>
<svg style="left:545.20px;top:93.20px" width="18" height="18" viewBox="0 0 18 18"><defs><linearGradient id="bg5" x1="0" y1="0" x2="0" y2="1"><stop offset="0" stop-color="#3aa4e8"/><stop offset="1" stop-color="#1b78c4"/></linearGradient></defs><rect x="0" y="0" width="18" height="18" rx="1.5" fill="url(#bg5)"/><rect x="0" y="15.5" width="18" height="2.5" rx="1" fill="#0e5fa8"/><text x="6" y="10" font-size="9.5" font-weight="bold" fill="#fff" font-family="Liberation Sans" text-anchor="middle">6</text></svg>
<div style="left:237.00px;top:124.00px;width:1257.00px;height:20.00px;background:#436288;"></div>
<div style="left:237.00px;top:144.00px;width:1257.00px;height:249.20px;background:#fff;"></div>
<div style="left:237.00px;top:393.20px;width:1258.00px;height:1.30px;background:#d2d1cc;"></div>
<div style="left:1494.00px;top:124.00px;width:1.20px;height:270.20px;background:#d2d1cc;"></div>
<svg style="left:241.00px;top:125.50px" width="15" height="17" viewBox="0 0 15 17"><rect x="0.3" y="0.2" width="12.4" height="16.2" fill="#e8f2fa"/><rect x="1.2" y="5.2" width="10.8" height="10.3" fill="#52b818"/><path d="M1.5 11.5 l3 -1.5 l2.5 0.8 l2.5 -3 M7.5 15 l2.5 -5" stroke="#a0e070" stroke-width="1" fill="none"/><circle cx="10.6" cy="4" r="3.7" fill="#ec6a66"/><rect x="10.2" y="2.5" width="1.6" height="2.5" fill="#f6a8a4"/></svg>
<div class="t" style="top:127.5px;font-size:11px;color:#fff;letter-spacing:0.790px;left:256.20px;text-shadow:0.4px 0 0 rgba(255,255,255,0.4);">(12) Letzte Angebote/Aufträge&nbsp;&nbsp;(11.02.2021 09:47:02)</div>
<svg style="left:1460.80px;top:127.80px" width="7.3" height="6" viewBox="0 0 7.3 6"><path d="M0 0 h7.3 l-3.65 6z" fill="#fff"/></svg>
<svg style="left:1471.00px;top:126.00px" width="8" height="4" viewBox="0 0 8 4"><rect x="0.6" y="0.6" width="6.8" height="2.8" rx="0.8" fill="#fff" stroke="#234a20" stroke-width="0.9"/></svg>
<svg style="left:1481.50px;top:126.00px" width="8.5" height="7" viewBox="0 0 8.5 7"><rect x="2.8" y="0.5" width="5.2" height="3" rx="0.8" fill="#fff" stroke="#234a20" stroke-width="0.9"/><rect x="0.5" y="3.5" width="5.2" height="3" rx="0.8" fill="#fff" stroke="#234a20" stroke-width="0.9"/></svg>
<div style="left:241.50px;top:149.00px;width:1248.00px;height:239.00px;background:#fff;box-shadow: inset 0 0 0 1px #e2e1dc;"></div>
<div style="left:1489.80px;top:382.80px;width:1.80px;height:1.80px;background:#bdbcb4;"></div>
<div style="left:1489.80px;top:386.30px;width:1.80px;height:1.80px;background:#bdbcb4;"></div>
<div style="left:1483.30px;top:389.80px;width:1.80px;height:1.80px;background:#bdbcb4;"></div>
<div style="left:1486.80px;top:389.80px;width:1.80px;height:1.80px;background:#bdbcb4;"></div>
<div style="left:1489.80px;top:389.80px;width:1.80px;height:1.80px;background:#bdbcb4;"></div>
<div style="left:242.00px;top:150.00px;width:29.00px;height:18.50px;background:#d4d3ce;"></div>
<div class="t" style="top:153.8px;font-size:11px;color:#3b3832;letter-spacing:-0.608px;left:246.00px;text-shadow:0.4px 0 0 rgba(59,56,50,0.4);">S</div>
<svg style="left:261.00px;top:154.80px" width="8.5" height="9.8" viewBox="0 0 8.5 9.8"><rect x="0" y="0" width="8.5" height="9.8" fill="#a8d4f4"/><rect x="0" y="0" width="8.5" height="1.3" fill="#4aa6e8"/><path d="M2.1 1 v8.8 M4.2 1 v8.8 M6.3 1 v8.8 M0 3.6 h8.5 M0 5.9 h8.5 M0 8.2 h8.5" stroke="#d8ecfa" stroke-width="0.6"/></svg>
<div style="left:272.10px;top:150.00px;width:35.80px;height:18.50px;background:#d4d3ce;"></div>
<div class="t" style="top:153.8px;font-size:11px;color:#3b3832;letter-spacing:-0.022px;left:276.10px;text-shadow:0.4px 0 0 rgba(59,56,50,0.4);">VA</div>
<svg style="left:297.90px;top:154.80px" width="8.5" height="9.8" viewBox="0 0 8.5 9.8"><rect x="0" y="0" width="8.5" height="9.8" fill="#a8d4f4"/><rect x="0" y="0" width="8.5" height="1.3" fill="#4aa6e8"/><path d="M2.1 1 v8.8 M4.2 1 v8.8 M6.3 1 v8.8 M0 3.6 h8.5 M0 5.9 h8.5 M0 8.2 h8.5" stroke="#d8ecfa" stroke-width="0.6"/></svg>
<div style="left:309.00px;top:150.00px;width:60.10px;height:18.50px;background:#d4d3ce;"></div>
<div class="t" style="top:153.8px;font-size:11px;color:#3b3832;letter-spacing:0.552px;left:313.00px;text-shadow:0.4px 0 0 rgba(59,56,50,0.4);">Aufnr</div>
<svg style="left:359.10px;top:154.80px" width="8.5" height="9.8" viewBox="0 0 8.5 9.8"><rect x="0" y="0" width="8.5" height="9.8" fill="#a8d4f4"/><rect x="0" y="0" width="8.5" height="1.3" fill="#4aa6e8"/><path d="M2.1 1 v8.8 M4.2 1 v8.8 M6.3 1 v8.8 M0 3.6 h8.5 M0 5.9 h8.5 M0 8.2 h8.5" stroke="#d8ecfa" stroke-width="0.6"/></svg>
<div style="left:370.20px;top:150.00px;width:57.70px;height:18.50px;background:#d4d3ce;"></div>
<div class="t" style="top:153.8px;font-size:11px;color:#3b3832;letter-spacing:0.399px;left:374.20px;text-shadow:0.4px 0 0 rgba(59,56,50,0.4);">Kundnr</div>
<svg style="left:417.90px;top:154.80px" width="8.5" height="9.8" viewBox="0 0 8.5 9.8"><rect x="0" y="0" width="8.5" height="9.8" fill="#a8d4f4"/><rect x="0" y="0" width="8.5" height="1.3" fill="#4aa6e8"/><path d="M2.1 1 v8.8 M4.2 1 v8.8 M6.3 1 v8.8 M0 3.6 h8.5 M0 5.9 h8.5 M0 8.2 h8.5" stroke="#d8ecfa" stroke-width="0.6"/></svg>
<div style="left:429.00px;top:150.00px;width:185.10px;height:18.50px;background:#d4d3ce;"></div>
<div class="t" style="top:153.8px;font-size:11px;color:#3b3832;letter-spacing:0.512px;left:433.00px;text-shadow:0.4px 0 0 rgba(59,56,50,0.4);">Nachname</div>
<svg style="left:604.10px;top:154.80px" width="8.5" height="9.8" viewBox="0 0 8.5 9.8"><rect x="0" y="0" width="8.5" height="9.8" fill="#a8d4f4"/><rect x="0" y="0" width="8.5" height="1.3" fill="#4aa6e8"/><path d="M2.1 1 v8.8 M4.2 1 v8.8 M6.3 1 v8.8 M0 3.6 h8.5 M0 5.9 h8.5 M0 8.2 h8.5" stroke="#d8ecfa" stroke-width="0.6"/></svg>
<div style="left:615.20px;top:150.00px;width:37.30px;height:18.50px;background:#d4d3ce;"></div>
<div class="t" style="top:153.8px;font-size:11px;color:#3b3832;letter-spacing:0.031px;left:619.20px;text-shadow:0.4px 0 0 rgba(59,56,50,0.4);">Ers</div>
<svg style="left:642.50px;top:154.80px" width="8.5" height="9.8" viewBox="0 0 8.5 9.8"><rect x="0" y="0" width="8.5" height="9.8" fill="#a8d4f4"/><rect x="0" y="0" width="8.5" height="1.3" fill="#4aa6e8"/><path d="M2.1 1 v8.8 M4.2 1 v8.8 M6.3 1 v8.8 M0 3.6 h8.5 M0 5.9 h8.5 M0 8.2 h8.5" stroke="#d8ecfa" stroke-width="0.6"/></svg>
<div style="left:653.60px;top:150.00px;width:73.30px;height:18.50px;background:#d4d3ce;"></div>
<div class="t" style="top:153.8px;font-size:11px;color:#3b3832;letter-spacing:0.463px;left:657.60px;text-shadow:0.4px 0 0 rgba(59,56,50,0.4);">Erstellung</div>
<svg style="left:716.90px;top:154.80px" width="8.5" height="9.8" viewBox="0 0 8.5 9.8"><rect x="0" y="0" width="8.5" height="9.8" fill="#a8d4f4"/><rect x="0" y="0" width="8.5" height="1.3" fill="#4aa6e8"/><path d="M2.1 1 v8.8 M4.2 1 v8.8 M6.3 1 v8.8 M0 3.6 h8.5 M0 5.9 h8.5 M0 8.2 h8.5" stroke="#d8ecfa" stroke-width="0.6"/></svg>
<div style="left:242.80px;top:169.00px;width:28.20px;height:15.20px;background:#f8f8fe;"></div>
<div style="left:272.10px;top:169.00px;width:35.80px;height:15.20px;background:#ebebe6;"></div>
<div style="left:309.00px;top:169.00px;width:60.10px;height:15.20px;background:#fdfad8;"></div>
<div style="left:370.20px;top:169.00px;width:57.70px;height:15.20px;background:#fdfad8;"></div>
<div style="left:429.00px;top:169.00px;width:185.10px;height:15.20px;background:#ebebe6;"></div>
<div style="left:615.20px;top:169.00px;width:37.30px;height:15.20px;background:#ebebe6;"></div>
<div style="left:653.60px;top:169.00px;width:73.30px;height:15.20px;background:#ebebe6;"></div>
<div style="left:242.80px;top:185.64px;width:28.20px;height:15.20px;background:#dfdff0;"></div>
<div style="left:272.10px;top:185.64px;width:35.80px;height:15.20px;background:#d3d2d8;"></div>
<div style="left:309.00px;top:185.64px;width:60.10px;height:15.20px;background:#e5e1cb;"></div>
<div style="left:370.20px;top:185.64px;width:57.70px;height:15.20px;background:#e5e1cb;"></div>
<div style="left:429.00px;top:185.64px;width:185.10px;height:15.20px;background:#d3d2d8;"></div>
<div style="left:615.20px;top:185.64px;width:37.30px;height:15.20px;background:#d3d2d8;"></div>
<div style="left:653.60px;top:185.64px;width:73.30px;height:15.20px;background:#d3d2d8;"></div>
<div style="left:242.80px;top:202.28px;width:28.20px;height:15.20px;background:#f8f8fe;"></div>
<div style="left:272.10px;top:202.28px;width:35.80px;height:15.20px;background:#ebebe6;"></div>
<div style="left:309.00px;top:202.28px;width:60.10px;height:15.20px;background:#fdfad8;"></div>
<div style="left:370.20px;top:202.28px;width:57.70px;height:15.20px;background:#fdfad8;"></div>
<div style="left:429.00px;top:202.28px;width:185.10px;height:15.20px;background:#ebebe6;"></div>
<div style="left:615.20px;top:202.28px;width:37.30px;height:15.20px;background:#ebebe6;"></div>
<div style="left:653.60px;top:202.28px;width:73.30px;height:15.20px;background:#ebebe6;"></div>
<div style="left:242.80px;top:218.92px;width:28.20px;height:15.20px;background:#f8f8fe;"></div>
<div style="left:272.10px;top:218.92px;width:35.80px;height:15.20px;background:#ebebe6;"></div>
<div style="left:309.00px;top:218.92px;width:60.10px;height:15.20px;background:#fdfad8;"></div>
<div style="left:370.20px;top:218.92px;width:57.70px;height:15.20px;background:#fdfad8;"></div>
<div style="left:429.00px;top:218.92px;width:185.10px;height:15.20px;background:#ebebe6;"></div>
<div style="left:615.20px;top:218.92px;width:37.30px;height:15.20px;background:#ebebe6;"></div>
<div style="left:653.60px;top:218.92px;width:73.30px;height:15.20px;background:#ebebe6;"></div>
<div style="left:242.80px;top:235.56px;width:28.20px;height:15.20px;background:#f8f8fe;"></div>
<div style="left:272.10px;top:235.56px;width:35.80px;height:15.20px;background:#ebebe6;"></div>
<div style="left:309.00px;top:235.56px;width:60.10px;height:15.20px;background:#fdfad8;"></div>
<div style="left:370.20px;top:235.56px;width:57.70px;height:15.20px;background:#fdfad8;"></div>
<div style="left:429.00px;top:235.56px;width:185.10px;height:15.20px;background:#ebebe6;"></div>
<div style="left:615.20px;top:235.56px;width:37.30px;height:15.20px;background:#ebebe6;"></div>
<div style="left:653.60px;top:235.56px;width:73.30px;height:15.20px;background:#ebebe6;"></div>
<div style="left:242.80px;top:252.20px;width:28.20px;height:15.20px;background:#f8f8fe;"></div>
<div style="left:272.10px;top:252.20px;width:35.80px;height:15.20px;background:#ebebe6;"></div>
<div style="left:309.00px;top:252.20px;width:60.10px;height:15.20px;background:#fdfad8;"></div>
<div style="left:370.20px;top:252.20px;width:57.70px;height:15.20px;background:#fdfad8;"></div>
<div style="left:429.00px;top:252.20px;width:185.10px;height:15.20px;background:#ebebe6;"></div>
<div style="left:615.20px;top:252.20px;width:37.30px;height:15.20px;background:#ebebe6;"></div>
<div style="left:653.60px;top:252.20px;width:73.30px;height:15.20px;background:#ebebe6;"></div>
<div style="left:242.80px;top:268.84px;width:28.20px;height:15.20px;background:#f8f8fe;"></div>
<div style="left:272.10px;top:268.84px;width:35.80px;height:15.20px;background:#ebebe6;"></div>
<div style="left:309.00px;top:268.84px;width:60.10px;height:15.20px;background:#fdfad8;"></div>
<div style="left:370.20px;top:268.84px;width:57.70px;height:15.20px;background:#fdfad8;"></div>
<div style="left:429.00px;top:268.84px;width:185.10px;height:15.20px;background:#ebebe6;"></div>
<div style="left:615.20px;top:268.84px;width:37.30px;height:15.20px;background:#ebebe6;"></div>
<div style="left:653.60px;top:268.84px;width:73.30px;height:15.20px;background:#ebebe6;"></div>
<div style="left:242.80px;top:285.48px;width:28.20px;height:15.20px;background:#f8f8fe;"></div>
<div style="left:272.10px;top:285.48px;width:35.80px;height:15.20px;background:#ebebe6;"></div>
<div style="left:309.00px;top:285.48px;width:60.10px;height:15.20px;background:#fdfad8;"></div>
<div style="left:370.20px;top:285.48px;width:57.70px;height:15.20px;background:#fdfad8;"></div>
<div style="left:429.00px;top:285.48px;width:185.10px;height:15.20px;background:#ebebe6;"></div>
<div style="left:615.20px;top:285.48px;width:37.30px;height:15.20px;background:#ebebe6;"></div>
<div style="left:653.60px;top:285.48px;width:73.30px;height:15.20px;background:#ebebe6;"></div>
<div style="left:242.80px;top:302.12px;width:28.20px;height:15.20px;background:#f8f8fe;"></div>
<div style="left:272.10px;top:302.12px;width:35.80px;height:15.20px;background:#ebebe6;"></div>
<div style="left:309.00px;top:302.12px;width:60.10px;height:15.20px;background:#fdfad8;"></div>
<div style="left:370.20px;top:302.12px;width:57.70px;height:15.20px;background:#fdfad8;"></div>
<div style="left:429.00px;top:302.12px;width:185.10px;height:15.20px;background:#ebebe6;"></div>
<div style="left:615.20px;top:302.12px;width:37.30px;height:15.20px;background:#ebebe6;"></div>
<div style="left:653.60px;top:302.12px;width:73.30px;height:15.20px;background:#ebebe6;"></div>
<div style="left:242.80px;top:318.76px;width:28.20px;height:15.20px;background:#f8f8fe;"></div>
<div style="left:272.10px;top:318.76px;width:35.80px;height:15.20px;background:#ebebe6;"></div>
<div style="left:309.00px;top:318.76px;width:60.10px;height:15.20px;background:#fdfad8;"></div>
<div style="left:370.20px;top:318.76px;width:57.70px;height:15.20px;background:#fdfad8;"></div>
<div style="left:429.00px;top:318.76px;width:185.10px;height:15.20px;background:#ebebe6;"></div>
<div style="left:615.20px;top:318.76px;width:37.30px;height:15.20px;background:#ebebe6;"></div>
<div style="left:653.60px;top:318.76px;width:73.30px;height:15.20px;background:#ebebe6;"></div>
<div style="left:242.80px;top:335.40px;width:28.20px;height:15.20px;background:#f8f8fe;"></div>
<div style="left:272.10px;top:335.40px;width:35.80px;height:15.20px;background:#ebebe6;"></div>
<div style="left:309.00px;top:335.40px;width:60.10px;height:15.20px;background:#fdfad8;"></div>
<div style="left:370.20px;top:335.40px;width:57.70px;height:15.20px;background:#fdfad8;"></div>
<div style="left:429.00px;top:335.40px;width:185.10px;height:15.20px;background:#ebebe6;"></div>
<div style="left:615.20px;top:335.40px;width:37.30px;height:15.20px;background:#ebebe6;"></div>
<div style="left:653.60px;top:335.40px;width:73.30px;height:15.20px;background:#ebebe6;"></div>
<div style="left:242.80px;top:352.04px;width:28.20px;height:15.20px;background:#f8f8fe;"></div>
<div style="left:272.10px;top:352.04px;width:35.80px;height:15.20px;background:#ebebe6;"></div>
<div style="left:309.00px;top:352.04px;width:60.10px;height:15.20px;background:#fdfad8;"></div>
<div style="left:370.20px;top:352.04px;width:57.70px;height:15.20px;background:#fdfad8;"></div>
<div style="left:429.00px;top:352.04px;width:185.10px;height:15.20px;background:#ebebe6;"></div>
<div style="left:615.20px;top:352.04px;width:37.30px;height:15.20px;background:#ebebe6;"></div>
<div style="left:653.60px;top:352.04px;width:73.30px;height:15.20px;background:#ebebe6;"></div>
<svg style="left:244.00px;top:171.20px" width="13.6" height="13" viewBox="0 0 13.6 13"><path d="M6.8 0.5 L13.3 12.5 H0.3z" fill="#f41c24" stroke="#d01018" stroke-width="0.5"/><rect x="6.1" y="4.5" width="1.4" height="4.5" fill="#600"/><rect x="6.1" y="10" width="1.4" height="1.5" fill="#600"/></svg>
<svg style="left:311.60px;top:171.00px" width="11" height="12.6" viewBox="0 0 11 12.6"><path d="M0.5 0 h4 v3 q6 1 6 9 h-10z" fill="#d88a2a"/><rect x="0" y="11" width="11" height="1.6" fill="#4a5a68"/><rect x="0.5" y="0" width="4" height="1" fill="#5a6a78"/></svg>
<div class="t" style="top:171.0px;font-size:11px;color:#22228a;letter-spacing:-0.648px;left:273.40px;text-shadow:0.4px 0 0 rgba(34,34,138,0.4);">R</div>
<div class="t" style="top:171.0px;font-size:11px;color:#22228a;letter-spacing:0.676px;left:327.00px;text-shadow:0.4px 0 0 rgba(34,34,138,0.4);">758</div>
<div class="t" style="top:171.0px;font-size:11px;color:#22228a;letter-spacing:0.626px;left:371.30px;text-shadow:0.4px 0 0 rgba(34,34,138,0.4);">50175</div>
<div class="t" style="top:171.0px;font-size:11px;color:#22228a;letter-spacing:0.279px;left:430.00px;text-shadow:0.4px 0 0 rgba(34,34,138,0.4);">Volkswagen AG</div>
<div class="t" style="top:171.0px;font-size:11px;color:#22228a;letter-spacing:0.536px;left:616.40px;text-shadow:0.4px 0 0 rgba(34,34,138,0.4);">daj</div>
<div class="t" style="top:171.0px;font-size:11px;color:#22228a;letter-spacing:0.534px;left:655.40px;text-shadow:0.4px 0 0 rgba(34,34,138,0.4);">12.03.2016</div>
<svg style="left:244.00px;top:187.84px" width="13.6" height="13" viewBox="0 0 13.6 13"><path d="M6.8 0.5 L13.3 12.5 H0.3z" fill="#f41c24" stroke="#d01018" stroke-width="0.5"/><rect x="6.1" y="4.5" width="1.4" height="4.5" fill="#600"/><rect x="6.1" y="10" width="1.4" height="1.5" fill="#600"/></svg>
<svg style="left:311.60px;top:187.64px" width="11" height="12.6" viewBox="0 0 11 12.6"><path d="M0.5 0 h4 v3 q6 1 6 9 h-10z" fill="#d88a2a"/><rect x="0" y="11" width="11" height="1.6" fill="#4a5a68"/><rect x="0.5" y="0" width="4" height="1" fill="#5a6a78"/></svg>
<div class="t" style="top:187.64000000000001px;font-size:11px;color:#22228a;letter-spacing:-0.155px;left:273.40px;text-shadow:0.4px 0 0 rgba(34,34,138,0.4);">A</div>
<div class="t" style="top:187.64000000000001px;font-size:11px;color:#22228a;letter-spacing:0.615px;left:327.00px;text-shadow:0.4px 0 0 rgba(34,34,138,0.4);">800010</div>
<div class="t" style="top:187.64000000000001px;font-size:11px;color:#22228a;letter-spacing:0.626px;left:371.30px;text-shadow:0.4px 0 0 rgba(34,34,138,0.4);">14420</div>
<div class="t" style="top:187.64000000000001px;font-size:11px;color:#22228a;letter-spacing:0.191px;left:430.00px;text-shadow:0.4px 0 0 rgba(34,34,138,0.4);">Marx GmbH &amp; Co. KG</div>
<div class="t" style="top:187.64000000000001px;font-size:11px;color:#22228a;letter-spacing:0.536px;left:616.40px;text-shadow:0.4px 0 0 rgba(34,34,138,0.4);">daj</div>
<div class="t" style="top:187.64000000000001px;font-size:11px;color:#22228a;letter-spacing:0.534px;left:655.40px;text-shadow:0.4px 0 0 rgba(34,34,138,0.4);">27.01.2020</div>
<svg style="left:244.00px;top:204.48px" width="13.6" height="13" viewBox="0 0 13.6 13"><path d="M6.8 0.5 L13.3 12.5 H0.3z" fill="#f41c24" stroke="#d01018" stroke-width="0.5"/><rect x="6.1" y="4.5" width="1.4" height="4.5" fill="#600"/><rect x="6.1" y="10" width="1.4" height="1.5" fill="#600"/></svg>
<svg style="left:311.60px;top:204.28px" width="11" height="12.6" viewBox="0 0 11 12.6"><path d="M0.5 0 h4 v3 q6 1 6 9 h-10z" fill="#d88a2a"/><rect x="0" y="11" width="11" height="1.6" fill="#4a5a68"/><rect x="0.5" y="0" width="4" height="1" fill="#5a6a78"/></svg>
<div class="t" style="top:204.28px;font-size:11px;color:#22228a;letter-spacing:-0.155px;left:273.40px;text-shadow:0.4px 0 0 rgba(34,34,138,0.4);">A</div>
<div class="t" style="top:204.28px;font-size:11px;color:#22228a;letter-spacing:0.615px;left:327.00px;text-shadow:0.4px 0 0 rgba(34,34,138,0.4);">800023</div>
<div class="t" style="top:204.28px;font-size:11px;color:#22228a;letter-spacing:0.877px;left:371.30px;text-shadow:0.4px 0 0 rgba(34,34,138,0.4);">4011</div>
<div class="t" style="top:204.28px;font-size:11px;color:#22228a;letter-spacing:0.265px;left:430.00px;text-shadow:0.4px 0 0 rgba(34,34,138,0.4);">Herrmann Bach GmbH &amp; Co. KG</div>
<div class="t" style="top:204.28px;font-size:11px;color:#22228a;letter-spacing:0.536px;left:616.40px;text-shadow:0.4px 0 0 rgba(34,34,138,0.4);">daj</div>
<div class="t" style="top:204.28px;font-size:11px;color:#22228a;letter-spacing:0.534px;left:655.40px;text-shadow:0.4px 0 0 rgba(34,34,138,0.4);">25.03.2020</div>
<svg style="left:244.00px;top:221.12px" width="13.6" height="13" viewBox="0 0 13.6 13"><path d="M6.8 0.5 L13.3 12.5 H0.3z" fill="#f41c24" stroke="#d01018" stroke-width="0.5"/><rect x="6.1" y="4.5" width="1.4" height="4.5" fill="#600"/><rect x="6.1" y="10" width="1.4" height="1.5" fill="#600"/></svg>
<svg style="left:311.60px;top:220.92px" width="11" height="12.6" viewBox="0 0 11 12.6"><path d="M0.5 0 h4 v3 q6 1 6 9 h-10z" fill="#d88a2a"/><rect x="0" y="11" width="11" height="1.6" fill="#4a5a68"/><rect x="0.5" y="0" width="4" height="1" fill="#5a6a78"/></svg>
<div class="t" style="top:220.92px;font-size:11px;color:#22228a;letter-spacing:-0.155px;left:273.40px;text-shadow:0.4px 0 0 rgba(34,34,138,0.4);">A</div>
<div class="t" style="top:220.92px;font-size:11px;color:#22228a;letter-spacing:0.615px;left:327.00px;text-shadow:0.4px 0 0 rgba(34,34,138,0.4);">800022</div>
<div class="t" style="top:220.92px;font-size:11px;color:#22228a;letter-spacing:0.877px;left:371.30px;text-shadow:0.4px 0 0 rgba(34,34,138,0.4);">4011</div>
<div class="t" style="top:220.92px;font-size:11px;color:#22228a;letter-spacing:0.265px;left:430.00px;text-shadow:0.4px 0 0 rgba(34,34,138,0.4);">Herrmann Bach GmbH &amp; Co. KG</div>
<div class="t" style="top:220.92px;font-size:11px;color:#22228a;letter-spacing:0.536px;left:616.40px;text-shadow:0.4px 0 0 rgba(34,34,138,0.4);">daj</div>
<div class="t" style="top:220.92px;font-size:11px;color:#22228a;letter-spacing:0.534px;left:655.40px;text-shadow:0.4px 0 0 rgba(34,34,138,0.4);">16.09.2019</div>
<svg style="left:244.00px;top:237.76px" width="13.6" height="13" viewBox="0 0 13.6 13"><path d="M6.8 0.5 L13.3 12.5 H0.3z" fill="#f41c24" stroke="#d01018" stroke-width="0.5"/><rect x="6.1" y="4.5" width="1.4" height="4.5" fill="#600"/><rect x="6.1" y="10" width="1.4" height="1.5" fill="#600"/></svg>
<svg style="left:311.60px;top:237.56px" width="11" height="12.6" viewBox="0 0 11 12.6"><path d="M0.5 0 h4 v3 q6 1 6 9 h-10z" fill="#d88a2a"/><rect x="0" y="11" width="11" height="1.6" fill="#4a5a68"/><rect x="0.5" y="0" width="4" height="1" fill="#5a6a78"/></svg>
<div class="t" style="top:237.56px;font-size:11px;color:#22228a;letter-spacing:0.564px;left:273.40px;text-shadow:0.4px 0 0 rgba(34,34,138,0.4);">7</div>
<div class="t" style="top:237.56px;font-size:11px;color:#22228a;letter-spacing:0.615px;left:327.00px;text-shadow:0.4px 0 0 rgba(34,34,138,0.4);">300024</div>
<div class="t" style="top:237.56px;font-size:11px;color:#22228a;letter-spacing:0.877px;left:371.30px;text-shadow:0.4px 0 0 rgba(34,34,138,0.4);">4011</div>
<div class="t" style="top:237.56px;font-size:11px;color:#22228a;letter-spacing:0.265px;left:430.00px;text-shadow:0.4px 0 0 rgba(34,34,138,0.4);">Herrmann Bach GmbH &amp; Co. KG</div>
<div class="t" style="top:237.56px;font-size:11px;color:#22228a;letter-spacing:0.536px;left:616.40px;text-shadow:0.4px 0 0 rgba(34,34,138,0.4);">daj</div>
<div class="t" style="top:237.56px;font-size:11px;color:#22228a;letter-spacing:0.534px;left:655.40px;text-shadow:0.4px 0 0 rgba(34,34,138,0.4);">23.01.2020</div>
<svg style="left:244.00px;top:254.40px" width="13.6" height="13" viewBox="0 0 13.6 13"><path d="M6.8 0.5 L13.3 12.5 H0.3z" fill="#f41c24" stroke="#d01018" stroke-width="0.5"/><rect x="6.1" y="4.5" width="1.4" height="4.5" fill="#600"/><rect x="6.1" y="10" width="1.4" height="1.5" fill="#600"/></svg>
<svg style="left:311.60px;top:254.20px" width="11" height="12.6" viewBox="0 0 11 12.6"><path d="M0.5 0 h4 v3 q6 1 6 9 h-10z" fill="#d88a2a"/><rect x="0" y="11" width="11" height="1.6" fill="#4a5a68"/><rect x="0.5" y="0" width="4" height="1" fill="#5a6a78"/></svg>
<div class="t" style="top:254.2px;font-size:11px;color:#22228a;letter-spacing:0.564px;left:273.40px;text-shadow:0.4px 0 0 rgba(34,34,138,0.4);">1</div>
<div class="t" style="top:254.2px;font-size:11px;color:#22228a;letter-spacing:0.615px;left:327.00px;text-shadow:0.4px 0 0 rgba(34,34,138,0.4);">300009</div>
<div class="t" style="top:254.2px;font-size:11px;color:#22228a;letter-spacing:0.626px;left:371.30px;text-shadow:0.4px 0 0 rgba(34,34,138,0.4);">14420</div>
<div class="t" style="top:254.2px;font-size:11px;color:#22228a;letter-spacing:0.191px;left:430.00px;text-shadow:0.4px 0 0 rgba(34,34,138,0.4);">Marx GmbH &amp; Co. KG</div>
<div class="t" style="top:254.2px;font-size:11px;color:#22228a;letter-spacing:0.536px;left:616.40px;text-shadow:0.4px 0 0 rgba(34,34,138,0.4);">daj</div>
<div class="t" style="top:254.2px;font-size:11px;color:#22228a;letter-spacing:0.534px;left:655.40px;text-shadow:0.4px 0 0 rgba(34,34,138,0.4);">13.02.2020</div>
<svg style="left:244.00px;top:271.04px" width="13.6" height="13" viewBox="0 0 13.6 13"><path d="M6.8 0.5 L13.3 12.5 H0.3z" fill="#f41c24" stroke="#d01018" stroke-width="0.5"/><rect x="6.1" y="4.5" width="1.4" height="4.5" fill="#600"/><rect x="6.1" y="10" width="1.4" height="1.5" fill="#600"/></svg>
<svg style="left:311.60px;top:270.84px" width="11" height="12.6" viewBox="0 0 11 12.6"><path d="M0.5 0 h4 v3 q6 1 6 9 h-10z" fill="#d88a2a"/><rect x="0" y="11" width="11" height="1.6" fill="#4a5a68"/><rect x="0.5" y="0" width="4" height="1" fill="#5a6a78"/></svg>
<div class="t" style="top:270.84px;font-size:11px;color:#22228a;letter-spacing:0.564px;left:273.40px;text-shadow:0.4px 0 0 rgba(34,34,138,0.4);">1</div>
<div class="t" style="top:270.84px;font-size:11px;color:#22228a;letter-spacing:0.615px;left:327.00px;text-shadow:0.4px 0 0 rgba(34,34,138,0.4);">100084</div>
<div class="t" style="top:270.84px;font-size:11px;color:#22228a;letter-spacing:0.626px;left:371.30px;text-shadow:0.4px 0 0 rgba(34,34,138,0.4);">12777</div>
<div class="t" style="top:270.84px;font-size:11px;color:#22228a;letter-spacing:0.348px;left:430.00px;text-shadow:0.4px 0 0 rgba(34,34,138,0.4);">Küppersbusch Großküchentechnik</div>
<div class="t" style="top:270.84px;font-size:11px;color:#22228a;letter-spacing:0.536px;left:616.40px;text-shadow:0.4px 0 0 rgba(34,34,138,0.4);">daj</div>
<div class="t" style="top:270.84px;font-size:11px;color:#22228a;letter-spacing:0.534px;left:655.40px;text-shadow:0.4px 0 0 rgba(34,34,138,0.4);">26.10.2020</div>
<svg style="left:244.00px;top:287.68px" width="13.6" height="13" viewBox="0 0 13.6 13"><path d="M6.8 0.5 L13.3 12.5 H0.3z" fill="#f41c24" stroke="#d01018" stroke-width="0.5"/><rect x="6.1" y="4.5" width="1.4" height="4.5" fill="#600"/><rect x="6.1" y="10" width="1.4" height="1.5" fill="#600"/></svg>
<svg style="left:311.60px;top:287.48px" width="11" height="12.6" viewBox="0 0 11 12.6"><path d="M0.5 0 h4 v3 q6 1 6 9 h-10z" fill="#d88a2a"/><rect x="0" y="11" width="11" height="1.6" fill="#4a5a68"/><rect x="0.5" y="0" width="4" height="1" fill="#5a6a78"/></svg>
<div class="t" style="top:287.47999999999996px;font-size:11px;color:#22228a;letter-spacing:0.564px;left:273.40px;text-shadow:0.4px 0 0 rgba(34,34,138,0.4);">1</div>
<div class="t" style="top:287.47999999999996px;font-size:11px;color:#22228a;letter-spacing:0.615px;left:327.00px;text-shadow:0.4px 0 0 rgba(34,34,138,0.4);">880008</div>
<div class="t" style="top:287.47999999999996px;font-size:11px;color:#22228a;letter-spacing:0.615px;left:371.30px;text-shadow:0.4px 0 0 rgba(34,34,138,0.4);">100421</div>
<div class="t" style="top:287.47999999999996px;font-size:11px;color:#22228a;letter-spacing:0.340px;left:430.00px;text-shadow:0.4px 0 0 rgba(34,34,138,0.4);">Siemens AG Industrie</div>
<div class="t" style="top:287.47999999999996px;font-size:11px;color:#22228a;letter-spacing:0.536px;left:616.40px;text-shadow:0.4px 0 0 rgba(34,34,138,0.4);">daj</div>
<div class="t" style="top:287.47999999999996px;font-size:11px;color:#22228a;letter-spacing:0.620px;left:655.40px;text-shadow:0.4px 0 0 rgba(34,34,138,0.4);">09.11.2020</div>
<svg style="left:244.00px;top:304.32px" width="13.6" height="13" viewBox="0 0 13.6 13"><path d="M6.8 0.5 L13.3 12.5 H0.3z" fill="#f41c24" stroke="#d01018" stroke-width="0.5"/><rect x="6.1" y="4.5" width="1.4" height="4.5" fill="#600"/><rect x="6.1" y="10" width="1.4" height="1.5" fill="#600"/></svg>
<svg style="left:311.60px;top:304.12px" width="11" height="12.6" viewBox="0 0 11 12.6"><path d="M0.5 0 h4 v3 q6 1 6 9 h-10z" fill="#d88a2a"/><rect x="0" y="11" width="11" height="1.6" fill="#4a5a68"/><rect x="0.5" y="0" width="4" height="1" fill="#5a6a78"/></svg>
<div class="t" style="top:304.12px;font-size:11px;color:#22228a;letter-spacing:0.564px;left:273.40px;text-shadow:0.4px 0 0 rgba(34,34,138,0.4);">1</div>
<div class="t" style="top:304.12px;font-size:11px;color:#22228a;letter-spacing:0.615px;left:327.00px;text-shadow:0.4px 0 0 rgba(34,34,138,0.4);">100091</div>
<div class="t" style="top:304.12px;font-size:11px;color:#22228a;letter-spacing:0.615px;left:371.30px;text-shadow:0.4px 0 0 rgba(34,34,138,0.4);">212230</div>
<div class="t" style="top:304.12px;font-size:11px;color:#22228a;letter-spacing:0.211px;left:430.00px;text-shadow:0.4px 0 0 rgba(34,34,138,0.4);">Loire Safe</div>
<div class="t" style="top:304.12px;font-size:11px;color:#22228a;letter-spacing:0.536px;left:616.40px;text-shadow:0.4px 0 0 rgba(34,34,138,0.4);">daj</div>
<div class="t" style="top:304.12px;font-size:11px;color:#22228a;letter-spacing:0.620px;left:655.40px;text-shadow:0.4px 0 0 rgba(34,34,138,0.4);">15.11.2020</div>
<svg style="left:244.00px;top:320.96px" width="13.6" height="13" viewBox="0 0 13.6 13"><path d="M6.8 0.5 L13.3 12.5 H0.3z" fill="#f41c24" stroke="#d01018" stroke-width="0.5"/><rect x="6.1" y="4.5" width="1.4" height="4.5" fill="#600"/><rect x="6.1" y="10" width="1.4" height="1.5" fill="#600"/></svg>
<svg style="left:311.60px;top:320.76px" width="11" height="12.6" viewBox="0 0 11 12.6"><path d="M0.5 0 h4 v3 q6 1 6 9 h-10z" fill="#d88a2a"/><rect x="0" y="11" width="11" height="1.6" fill="#4a5a68"/><rect x="0.5" y="0" width="4" height="1" fill="#5a6a78"/></svg>
<div class="t" style="top:320.76px;font-size:11px;color:#22228a;letter-spacing:0.564px;left:273.40px;text-shadow:0.4px 0 0 rgba(34,34,138,0.4);">4</div>
<div class="t" style="top:320.76px;font-size:11px;color:#22228a;letter-spacing:0.615px;left:327.00px;text-shadow:0.4px 0 0 rgba(34,34,138,0.4);">200449</div>
<div class="t" style="top:320.76px;font-size:11px;color:#22228a;letter-spacing:0.615px;left:371.30px;text-shadow:0.4px 0 0 rgba(34,34,138,0.4);">454545</div>
<div class="t" style="top:320.76px;font-size:11px;color:#22228a;letter-spacing:0.203px;left:430.00px;text-shadow:0.4px 0 0 rgba(34,34,138,0.4);">Meier GmbH &amp; Co. KG</div>
<div class="t" style="top:320.76px;font-size:11px;color:#22228a;letter-spacing:0.536px;left:616.40px;text-shadow:0.4px 0 0 rgba(34,34,138,0.4);">daj</div>
<div class="t" style="top:320.76px;font-size:11px;color:#22228a;letter-spacing:0.534px;left:655.40px;text-shadow:0.4px 0 0 rgba(34,34,138,0.4);">29.02.2020</div>
<svg style="left:244.00px;top:337.60px" width="13.6" height="13" viewBox="0 0 13.6 13"><path d="M6.8 0.5 L13.3 12.5 H0.3z" fill="#f41c24" stroke="#d01018" stroke-width="0.5"/><rect x="6.1" y="4.5" width="1.4" height="4.5" fill="#600"/><rect x="6.1" y="10" width="1.4" height="1.5" fill="#600"/></svg>
<svg style="left:311.60px;top:337.40px" width="11" height="12.6" viewBox="0 0 11 12.6"><path d="M0.5 0 h4 v3 q6 1 6 9 h-10z" fill="#d88a2a"/><rect x="0" y="11" width="11" height="1.6" fill="#4a5a68"/><rect x="0.5" y="0" width="4" height="1" fill="#5a6a78"/></svg>
<div class="t" style="top:337.4px;font-size:11px;color:#22228a;letter-spacing:0.564px;left:273.40px;text-shadow:0.4px 0 0 rgba(34,34,138,0.4);">5</div>
<div class="t" style="top:337.4px;font-size:11px;color:#22228a;letter-spacing:0.615px;left:327.00px;text-shadow:0.4px 0 0 rgba(34,34,138,0.4);">200432</div>
<div class="t" style="top:337.4px;font-size:11px;color:#22228a;letter-spacing:0.615px;left:371.30px;text-shadow:0.4px 0 0 rgba(34,34,138,0.4);">500001</div>
<div class="t" style="top:337.4px;font-size:11px;color:#22228a;letter-spacing:0.429px;left:430.00px;text-shadow:0.4px 0 0 rgba(34,34,138,0.4);">Wilhelm Müller</div>
<div class="t" style="top:337.4px;font-size:11px;color:#22228a;letter-spacing:0.536px;left:616.40px;text-shadow:0.4px 0 0 rgba(34,34,138,0.4);">daj</div>
<div class="t" style="top:337.4px;font-size:11px;color:#22228a;letter-spacing:0.620px;left:655.40px;text-shadow:0.4px 0 0 rgba(34,34,138,0.4);">08.11.2020</div>
<svg style="left:244.00px;top:354.24px" width="13.6" height="13" viewBox="0 0 13.6 13"><path d="M6.8 0.5 L13.3 12.5 H0.3z" fill="#f41c24" stroke="#d01018" stroke-width="0.5"/><rect x="6.1" y="4.5" width="1.4" height="4.5" fill="#600"/><rect x="6.1" y="10" width="1.4" height="1.5" fill="#600"/></svg>
<svg style="left:311.60px;top:354.04px" width="11" height="12.6" viewBox="0 0 11 12.6"><path d="M0.5 0 h4 v3 q6 1 6 9 h-10z" fill="#d88a2a"/><rect x="0" y="11" width="11" height="1.6" fill="#4a5a68"/><rect x="0.5" y="0" width="4" height="1" fill="#5a6a78"/></svg>
<div class="t" style="top:354.03999999999996px;font-size:11px;color:#22228a;letter-spacing:0.564px;left:273.40px;text-shadow:0.4px 0 0 rgba(34,34,138,0.4);">1</div>
<div class="t" style="top:354.03999999999996px;font-size:11px;color:#22228a;letter-spacing:0.615px;left:327.00px;text-shadow:0.4px 0 0 rgba(34,34,138,0.4);">880009</div>
<div class="t" style="top:354.03999999999996px;font-size:11px;color:#22228a;letter-spacing:0.615px;left:371.30px;text-shadow:0.4px 0 0 rgba(34,34,138,0.4);">100421</div>
<div class="t" style="top:354.03999999999996px;font-size:11px;color:#22228a;letter-spacing:0.340px;left:430.00px;text-shadow:0.4px 0 0 rgba(34,34,138,0.4);">Siemens AG Industrie</div>
<div class="t" style="top:354.03999999999996px;font-size:11px;color:#22228a;letter-spacing:0.536px;left:616.40px;text-shadow:0.4px 0 0 rgba(34,34,138,0.4);">daj</div>
<div class="t" style="top:354.03999999999996px;font-size:11px;color:#22228a;letter-spacing:0.620px;left:655.40px;text-shadow:0.4px 0 0 rgba(34,34,138,0.4);">09.11.2020</div>
<div style="left:237.00px;top:397.00px;width:1257.00px;height:20.00px;background:#436288;"></div>
<div style="left:237.00px;top:417.00px;width:1257.00px;height:99.40px;background:#fff;"></div>
<div style="left:237.00px;top:516.40px;width:1258.00px;height:1.30px;background:#d2d1cc;"></div>
<div style="left:1494.00px;top:397.00px;width:1.20px;height:120.40px;background:#d2d1cc;"></div>
<svg style="left:241.00px;top:398.50px" width="15" height="17" viewBox="0 0 15 17"><rect x="0.3" y="0.2" width="12.4" height="16.2" fill="#e8f2fa"/><rect x="1.2" y="5.2" width="10.8" height="10.3" fill="#52b818"/><path d="M1.5 11.5 l3 -1.5 l2.5 0.8 l2.5 -3 M7.5 15 l2.5 -5" stroke="#a0e070" stroke-width="1" fill="none"/><circle cx="10.6" cy="4" r="3.7" fill="#ec6a66"/><rect x="10.2" y="2.5" width="1.6" height="2.5" fill="#f6a8a4"/></svg>
<div class="t" style="top:400.5px;font-size:11px;color:#fff;letter-spacing:0.672px;left:256.20px;text-shadow:0.4px 0 0 rgba(255,255,255,0.4);">(1) Wiedervorlagen&nbsp;&nbsp;(11.02.2021 09:47:01)</div>
<svg style="left:1460.80px;top:400.80px" width="7.3" height="6" viewBox="0 0 7.3 6"><path d="M0 0 h7.3 l-3.65 6z" fill="#fff"/></svg>
<svg style="left:1471.00px;top:399.00px" width="8" height="4" viewBox="0 0 8 4"><rect x="0.6" y="0.6" width="6.8" height="2.8" rx="0.8" fill="#fff" stroke="#234a20" stroke-width="0.9"/></svg>
<svg style="left:1481.50px;top:399.00px" width="8.5" height="7" viewBox="0 0 8.5 7"><rect x="2.8" y="0.5" width="5.2" height="3" rx="0.8" fill="#fff" stroke="#234a20" stroke-width="0.9"/><rect x="0.5" y="3.5" width="5.2" height="3" rx="0.8" fill="#fff" stroke="#234a20" stroke-width="0.9"/></svg>
<div style="left:241.50px;top:421.80px;width:1248.00px;height:89.50px;background:#fff;box-shadow: inset 0 0 0 1px #e2e1dc;"></div>
<div style="left:1489.80px;top:505.80px;width:1.80px;height:1.80px;background:#bdbcb4;"></div>
<div style="left:1489.80px;top:509.30px;width:1.80px;height:1.80px;background:#bdbcb4;"></div>
<div style="left:1483.30px;top:512.80px;width:1.80px;height:1.80px;background:#bdbcb4;"></div>
<div style="left:1486.80px;top:512.80px;width:1.80px;height:1.80px;background:#bdbcb4;"></div>
<div style="left:1489.80px;top:512.80px;width:1.80px;height:1.80px;background:#bdbcb4;"></div>
<div style="left:0;top:0;width:1500px;height:938px;clip-path:inset(422px 11.200000000000045px 427px 242px)">
<div style="left:242.00px;top:422.70px;width:28.60px;height:18.50px;background:#d4d3ce;"></div>
<div class="t" style="top:426.5px;font-size:11px;color:#3b3832;letter-spacing:-0.608px;left:246.00px;text-shadow:0.4px 0 0 rgba(59,56,50,0.4);">S</div>
<svg style="left:260.60px;top:427.50px" width="8.5" height="9.8" viewBox="0 0 8.5 9.8"><rect x="0" y="0" width="8.5" height="9.8" fill="#a8d4f4"/><rect x="0" y="0" width="8.5" height="1.3" fill="#4aa6e8"/><path d="M2.1 1 v8.8 M4.2 1 v8.8 M6.3 1 v8.8 M0 3.6 h8.5 M0 5.9 h8.5 M0 8.2 h8.5" stroke="#d8ecfa" stroke-width="0.6"/></svg>
<div style="left:271.70px;top:422.70px;width:49.60px;height:18.50px;background:#d4d3ce;"></div>
<div class="t" style="top:426.5px;font-size:11px;color:#3b3832;letter-spacing:-0.038px;left:275.70px;text-shadow:0.4px 0 0 rgba(59,56,50,0.4);">Er-ID</div>
<svg style="left:311.30px;top:427.50px" width="8.5" height="9.8" viewBox="0 0 8.5 9.8"><rect x="0" y="0" width="8.5" height="9.8" fill="#a8d4f4"/><rect x="0" y="0" width="8.5" height="1.3" fill="#4aa6e8"/><path d="M2.1 1 v8.8 M4.2 1 v8.8 M6.3 1 v8.8 M0 3.6 h8.5 M0 5.9 h8.5 M0 8.2 h8.5" stroke="#d8ecfa" stroke-width="0.6"/></svg>
<div style="left:322.40px;top:422.70px;width:78.30px;height:18.50px;background:#d4d3ce;"></div>
<div class="t" style="top:426.5px;font-size:11px;color:#3b3832;letter-spacing:0.547px;left:326.40px;text-shadow:0.4px 0 0 rgba(59,56,50,0.4);">Wievorldat</div>
<svg style="left:390.70px;top:427.50px" width="8.5" height="9.8" viewBox="0 0 8.5 9.8"><rect x="0" y="0" width="8.5" height="9.8" fill="#a8d4f4"/><rect x="0" y="0" width="8.5" height="1.3" fill="#4aa6e8"/><path d="M2.1 1 v8.8 M4.2 1 v8.8 M6.3 1 v8.8 M0 3.6 h8.5 M0 5.9 h8.5 M0 8.2 h8.5" stroke="#d8ecfa" stroke-width="0.6"/></svg>
<div style="left:401.80px;top:422.70px;width:68.30px;height:18.50px;background:#d4d3ce;"></div>
<div class="t" style="top:426.5px;font-size:11px;color:#3b3832;letter-spacing:0.546px;left:405.80px;text-shadow:0.4px 0 0 rgba(59,56,50,0.4);">WievZeit</div>
<svg style="left:460.10px;top:427.50px" width="8.5" height="9.8" viewBox="0 0 8.5 9.8"><rect x="0" y="0" width="8.5" height="9.8" fill="#a8d4f4"/><rect x="0" y="0" width="8.5" height="1.3" fill="#4aa6e8"/><path d="M2.1 1 v8.8 M4.2 1 v8.8 M6.3 1 v8.8 M0 3.6 h8.5 M0 5.9 h8.5 M0 8.2 h8.5" stroke="#d8ecfa" stroke-width="0.6"/></svg>
<div style="left:471.20px;top:422.70px;width:153.00px;height:18.50px;background:#d4d3ce;"></div>
<div class="t" style="top:426.5px;font-size:11px;color:#3b3832;letter-spacing:0.381px;left:475.20px;text-shadow:0.4px 0 0 rgba(59,56,50,0.4);">Wiedervorlage-Text</div>
<svg style="left:614.20px;top:427.50px" width="8.5" height="9.8" viewBox="0 0 8.5 9.8"><rect x="0" y="0" width="8.5" height="9.8" fill="#a8d4f4"/><rect x="0" y="0" width="8.5" height="1.3" fill="#4aa6e8"/><path d="M2.1 1 v8.8 M4.2 1 v8.8 M6.3 1 v8.8 M0 3.6 h8.5 M0 5.9 h8.5 M0 8.2 h8.5" stroke="#d8ecfa" stroke-width="0.6"/></svg>
<div style="left:625.30px;top:422.70px;width:34.60px;height:18.50px;background:#d4d3ce;"></div>
<div class="t" style="top:426.5px;font-size:11px;color:#3b3832;letter-spacing:-0.420px;left:629.30px;text-shadow:0.4px 0 0 rgba(59,56,50,0.4);">TK</div>
<svg style="left:649.90px;top:427.50px" width="8.5" height="9.8" viewBox="0 0 8.5 9.8"><rect x="0" y="0" width="8.5" height="9.8" fill="#a8d4f4"/><rect x="0" y="0" width="8.5" height="1.3" fill="#4aa6e8"/><path d="M2.1 1 v8.8 M4.2 1 v8.8 M6.3 1 v8.8 M0 3.6 h8.5 M0 5.9 h8.5 M0 8.2 h8.5" stroke="#d8ecfa" stroke-width="0.6"/></svg>
<div style="left:661.00px;top:422.70px;width:34.40px;height:18.50px;background:#d4d3ce;"></div>
<div class="t" style="top:426.5px;font-size:11px;color:#3b3832;letter-spacing:-0.812px;left:665.00px;text-shadow:0.4px 0 0 rgba(59,56,50,0.4);">ER</div>
<svg style="left:685.40px;top:427.50px" width="8.5" height="9.8" viewBox="0 0 8.5 9.8"><rect x="0" y="0" width="8.5" height="9.8" fill="#a8d4f4"/><rect x="0" y="0" width="8.5" height="1.3" fill="#4aa6e8"/><path d="M2.1 1 v8.8 M4.2 1 v8.8 M6.3 1 v8.8 M0 3.6 h8.5 M0 5.9 h8.5 M0 8.2 h8.5" stroke="#d8ecfa" stroke-width="0.6"/></svg>
<div style="left:696.50px;top:422.70px;width:45.60px;height:18.50px;background:#d4d3ce;"></div>
<div class="t" style="top:426.5px;font-size:11px;color:#3b3832;letter-spacing:-0.053px;left:700.50px;text-shadow:0.4px 0 0 rgba(59,56,50,0.4);">WSa</div>
<svg style="left:732.10px;top:427.50px" width="8.5" height="9.8" viewBox="0 0 8.5 9.8"><rect x="0" y="0" width="8.5" height="9.8" fill="#a8d4f4"/><rect x="0" y="0" width="8.5" height="1.3" fill="#4aa6e8"/><path d="M2.1 1 v8.8 M4.2 1 v8.8 M6.3 1 v8.8 M0 3.6 h8.5 M0 5.9 h8.5 M0 8.2 h8.5" stroke="#d8ecfa" stroke-width="0.6"/></svg>
<div style="left:743.20px;top:422.70px;width:77.50px;height:18.50px;background:#d4d3ce;"></div>
<div class="t" style="top:426.5px;font-size:11px;color:#3b3832;letter-spacing:0.545px;left:747.20px;text-shadow:0.4px 0 0 rgba(59,56,50,0.4);">ErstDatum</div>
<svg style="left:810.70px;top:427.50px" width="8.5" height="9.8" viewBox="0 0 8.5 9.8"><rect x="0" y="0" width="8.5" height="9.8" fill="#a8d4f4"/><rect x="0" y="0" width="8.5" height="1.3" fill="#4aa6e8"/><path d="M2.1 1 v8.8 M4.2 1 v8.8 M6.3 1 v8.8 M0 3.6 h8.5 M0 5.9 h8.5 M0 8.2 h8.5" stroke="#d8ecfa" stroke-width="0.6"/></svg>
<div style="left:821.80px;top:422.70px;width:53.10px;height:18.50px;background:#d4d3ce;"></div>
<div class="t" style="top:426.5px;font-size:11px;color:#3b3832;letter-spacing:0.728px;left:825.80px;text-shadow:0.4px 0 0 rgba(59,56,50,0.4);">Zeit</div>
<svg style="left:864.90px;top:427.50px" width="8.5" height="9.8" viewBox="0 0 8.5 9.8"><rect x="0" y="0" width="8.5" height="9.8" fill="#a8d4f4"/><rect x="0" y="0" width="8.5" height="1.3" fill="#4aa6e8"/><path d="M2.1 1 v8.8 M4.2 1 v8.8 M6.3 1 v8.8 M0 3.6 h8.5 M0 5.9 h8.5 M0 8.2 h8.5" stroke="#d8ecfa" stroke-width="0.6"/></svg>
<div style="left:876.00px;top:422.70px;width:40.70px;height:18.50px;background:#d4d3ce;"></div>
<div class="t" style="top:426.5px;font-size:11px;color:#3b3832;letter-spacing:0.451px;left:880.00px;text-shadow:0.4px 0 0 rgba(59,56,50,0.4);">Änd</div>
<svg style="left:906.70px;top:427.50px" width="8.5" height="9.8" viewBox="0 0 8.5 9.8"><rect x="0" y="0" width="8.5" height="9.8" fill="#a8d4f4"/><rect x="0" y="0" width="8.5" height="1.3" fill="#4aa6e8"/><path d="M2.1 1 v8.8 M4.2 1 v8.8 M6.3 1 v8.8 M0 3.6 h8.5 M0 5.9 h8.5 M0 8.2 h8.5" stroke="#d8ecfa" stroke-width="0.6"/></svg>
<div style="left:917.80px;top:422.70px;width:72.30px;height:18.50px;background:#d4d3ce;"></div>
<div class="t" style="top:426.5px;font-size:11px;color:#3b3832;letter-spacing:0.539px;left:921.80px;text-shadow:0.4px 0 0 rgba(59,56,50,0.4);">Änderung</div>
<svg style="left:980.10px;top:427.50px" width="8.5" height="9.8" viewBox="0 0 8.5 9.8"><rect x="0" y="0" width="8.5" height="9.8" fill="#a8d4f4"/><rect x="0" y="0" width="8.5" height="1.3" fill="#4aa6e8"/><path d="M2.1 1 v8.8 M4.2 1 v8.8 M6.3 1 v8.8 M0 3.6 h8.5 M0 5.9 h8.5 M0 8.2 h8.5" stroke="#d8ecfa" stroke-width="0.6"/></svg>
<div style="left:991.20px;top:422.70px;width:62.30px;height:18.50px;background:#d4d3ce;"></div>
<div class="t" style="top:426.5px;font-size:11px;color:#3b3832;letter-spacing:0.565px;left:995.20px;text-shadow:0.4px 0 0 rgba(59,56,50,0.4);">ÄndZeit</div>
<svg style="left:1043.50px;top:427.50px" width="8.5" height="9.8" viewBox="0 0 8.5 9.8"><rect x="0" y="0" width="8.5" height="9.8" fill="#a8d4f4"/><rect x="0" y="0" width="8.5" height="1.3" fill="#4aa6e8"/><path d="M2.1 1 v8.8 M4.2 1 v8.8 M6.3 1 v8.8 M0 3.6 h8.5 M0 5.9 h8.5 M0 8.2 h8.5" stroke="#d8ecfa" stroke-width="0.6"/></svg>
<div style="left:1054.60px;top:422.70px;width:74.70px;height:18.50px;background:#d4d3ce;"></div>
<div class="t" style="top:426.5px;font-size:11px;color:#3b3832;letter-spacing:0.375px;left:1058.60px;text-shadow:0.4px 0 0 rgba(59,56,50,0.4);">Object-ID</div>
<svg style="left:1119.30px;top:427.50px" width="8.5" height="9.8" viewBox="0 0 8.5 9.8"><rect x="0" y="0" width="8.5" height="9.8" fill="#a8d4f4"/><rect x="0" y="0" width="8.5" height="1.3" fill="#4aa6e8"/><path d="M2.1 1 v8.8 M4.2 1 v8.8 M6.3 1 v8.8 M0 3.6 h8.5 M0 5.9 h8.5 M0 8.2 h8.5" stroke="#d8ecfa" stroke-width="0.6"/></svg>
<div style="left:1130.40px;top:422.70px;width:43.10px;height:18.50px;background:#d4d3ce;"></div>
<div class="t" style="top:426.5px;font-size:11px;color:#3b3832;letter-spacing:-0.415px;left:1134.40px;text-shadow:0.4px 0 0 rgba(59,56,50,0.4);">VGS</div>
<svg style="left:1163.50px;top:427.50px" width="8.5" height="9.8" viewBox="0 0 8.5 9.8"><rect x="0" y="0" width="8.5" height="9.8" fill="#a8d4f4"/><rect x="0" y="0" width="8.5" height="1.3" fill="#4aa6e8"/><path d="M2.1 1 v8.8 M4.2 1 v8.8 M6.3 1 v8.8 M0 3.6 h8.5 M0 5.9 h8.5 M0 8.2 h8.5" stroke="#d8ecfa" stroke-width="0.6"/></svg>
<div style="left:1174.60px;top:422.70px;width:58.10px;height:18.50px;background:#d4d3ce;"></div>
<div class="t" style="top:426.5px;font-size:11px;color:#3b3832;letter-spacing:0.399px;left:1178.60px;text-shadow:0.4px 0 0 rgba(59,56,50,0.4);">Kundnr</div>
<svg style="left:1222.70px;top:427.50px" width="8.5" height="9.8" viewBox="0 0 8.5 9.8"><rect x="0" y="0" width="8.5" height="9.8" fill="#a8d4f4"/><rect x="0" y="0" width="8.5" height="1.3" fill="#4aa6e8"/><path d="M2.1 1 v8.8 M4.2 1 v8.8 M6.3 1 v8.8 M0 3.6 h8.5 M0 5.9 h8.5 M0 8.2 h8.5" stroke="#d8ecfa" stroke-width="0.6"/></svg>
<div style="left:1233.80px;top:422.70px;width:60.30px;height:18.50px;background:#d4d3ce;"></div>
<div class="t" style="top:426.5px;font-size:11px;color:#3b3832;letter-spacing:-0.062px;left:1237.80px;text-shadow:0.4px 0 0 rgba(59,56,50,0.4);">AnspPC</div>
<svg style="left:1284.10px;top:427.50px" width="8.5" height="9.8" viewBox="0 0 8.5 9.8"><rect x="0" y="0" width="8.5" height="9.8" fill="#a8d4f4"/><rect x="0" y="0" width="8.5" height="1.3" fill="#4aa6e8"/><path d="M2.1 1 v8.8 M4.2 1 v8.8 M6.3 1 v8.8 M0 3.6 h8.5 M0 5.9 h8.5 M0 8.2 h8.5" stroke="#d8ecfa" stroke-width="0.6"/></svg>
<div style="left:1295.20px;top:422.70px;width:110.90px;height:18.50px;background:#d4d3ce;"></div>
<div class="t" style="top:426.5px;font-size:11px;color:#3b3832;letter-spacing:0.512px;left:1299.20px;text-shadow:0.4px 0 0 rgba(59,56,50,0.4);">Ansprechpartner</div>
<svg style="left:1396.10px;top:427.50px" width="8.5" height="9.8" viewBox="0 0 8.5 9.8"><rect x="0" y="0" width="8.5" height="9.8" fill="#a8d4f4"/><rect x="0" y="0" width="8.5" height="1.3" fill="#4aa6e8"/><path d="M2.1 1 v8.8 M4.2 1 v8.8 M6.3 1 v8.8 M0 3.6 h8.5 M0 5.9 h8.5 M0 8.2 h8.5" stroke="#d8ecfa" stroke-width="0.6"/></svg>
<div style="left:1407.20px;top:422.70px;width:66.90px;height:18.50px;background:#d4d3ce;"></div>
<div class="t" style="top:426.5px;font-size:11px;color:#3b3832;letter-spacing:0.251px;left:1411.20px;text-shadow:0.4px 0 0 rgba(59,56,50,0.4);">Adr-IdNr</div>
<svg style="left:1464.10px;top:427.50px" width="8.5" height="9.8" viewBox="0 0 8.5 9.8"><rect x="0" y="0" width="8.5" height="9.8" fill="#a8d4f4"/><rect x="0" y="0" width="8.5" height="1.3" fill="#4aa6e8"/><path d="M2.1 1 v8.8 M4.2 1 v8.8 M6.3 1 v8.8 M0 3.6 h8.5 M0 5.9 h8.5 M0 8.2 h8.5" stroke="#d8ecfa" stroke-width="0.6"/></svg>
<div style="left:1475.20px;top:422.70px;width:63.20px;height:18.50px;background:#d4d3ce;"></div>
<div class="t" style="top:426.5px;font-size:11px;color:#3b3832;letter-spacing:0.037px;left:1479.20px;text-shadow:0.4px 0 0 rgba(59,56,50,0.4);">Er</div>
<svg style="left:1528.40px;top:427.50px" width="8.5" height="9.8" viewBox="0 0 8.5 9.8"><rect x="0" y="0" width="8.5" height="9.8" fill="#a8d4f4"/><rect x="0" y="0" width="8.5" height="1.3" fill="#4aa6e8"/><path d="M2.1 1 v8.8 M4.2 1 v8.8 M6.3 1 v8.8 M0 3.6 h8.5 M0 5.9 h8.5 M0 8.2 h8.5" stroke="#d8ecfa" stroke-width="0.6"/></svg>
<div style="left:242.80px;top:441.70px;width:27.80px;height:15.20px;background:#f8f8fe;"></div>
<div style="left:271.70px;top:441.70px;width:49.60px;height:15.20px;background:#ebebe6;"></div>
<div style="left:322.40px;top:441.70px;width:78.30px;height:15.20px;background:#ebebe6;"></div>
<div style="left:401.80px;top:441.70px;width:68.30px;height:15.20px;background:#ebebe6;"></div>
<div style="left:471.20px;top:441.70px;width:153.00px;height:15.20px;background:#ebebe6;"></div>
<div style="left:625.30px;top:441.70px;width:34.60px;height:15.20px;background:#ebebe6;"></div>
<div style="left:661.00px;top:441.70px;width:34.40px;height:15.20px;background:#ebebe6;"></div>
<div style="left:696.50px;top:441.70px;width:45.60px;height:15.20px;background:#ebebe6;"></div>
<div style="left:743.20px;top:441.70px;width:77.50px;height:15.20px;background:#ebebe6;"></div>
<div style="left:821.80px;top:441.70px;width:53.10px;height:15.20px;background:#ebebe6;"></div>
<div style="left:876.00px;top:441.70px;width:40.70px;height:15.20px;background:#ebebe6;"></div>
<div style="left:917.80px;top:441.70px;width:72.30px;height:15.20px;background:#ebebe6;"></div>
<div style="left:991.20px;top:441.70px;width:62.30px;height:15.20px;background:#ebebe6;"></div>
<div style="left:1054.60px;top:441.70px;width:74.70px;height:15.20px;background:#ebebe6;"></div>
<div style="left:1130.40px;top:441.70px;width:43.10px;height:15.20px;background:#ebebe6;"></div>
<div style="left:1174.60px;top:441.70px;width:58.10px;height:15.20px;background:#ebebe6;"></div>
<div style="left:1233.80px;top:441.70px;width:60.30px;height:15.20px;background:#ebebe6;"></div>
<div style="left:1295.20px;top:441.70px;width:110.90px;height:15.20px;background:#ebebe6;"></div>
<div style="left:1407.20px;top:441.70px;width:66.90px;height:15.20px;background:#ebebe6;"></div>
<div style="left:1475.20px;top:441.70px;width:63.20px;height:15.20px;background:#ebebe6;"></div>
<svg style="left:244.00px;top:443.90px" width="13.6" height="13" viewBox="0 0 13.6 13"><path d="M6.8 0.5 L13.3 12.5 H0.3z" fill="#f41c24" stroke="#d01018" stroke-width="0.5"/><rect x="6.1" y="4.5" width="1.4" height="4.5" fill="#600"/><rect x="6.1" y="10" width="1.4" height="1.5" fill="#600"/></svg>
<div class="t" style="top:443.7px;font-size:11px;color:#22228a;letter-spacing:0.676px;left:273.30px;text-shadow:0.4px 0 0 rgba(34,34,138,0.4);">226</div>
<div class="t" style="top:443.7px;font-size:11px;color:#22228a;letter-spacing:0.620px;left:324.00px;text-shadow:0.4px 0 0 rgba(34,34,138,0.4);">23.11.2020</div>
<div class="t" style="top:443.7px;font-size:11px;color:#22228a;letter-spacing:0.452px;left:472.80px;text-shadow:0.4px 0 0 rgba(34,34,138,0.4);">Info an Projektmanagement</div>
<div class="t" style="top:443.7px;font-size:11px;color:#22228a;left:626.90px;text-shadow:0.4px 0 0 rgba(34,34,138,0.4);">W</div>
<div class="t" style="top:443.7px;font-size:11px;color:#22228a;letter-spacing:0.536px;left:698.10px;text-shadow:0.4px 0 0 rgba(34,34,138,0.4);">daj</div>
<div class="t" style="top:443.7px;font-size:11px;color:#22228a;letter-spacing:0.534px;left:744.80px;text-shadow:0.4px 0 0 rgba(34,34,138,0.4);">04.10.2018</div>
<div class="t" style="top:443.7px;font-size:11px;color:#22228a;letter-spacing:0.579px;left:823.40px;text-shadow:0.4px 0 0 rgba(34,34,138,0.4);">14:36:23</div>
<div class="t" style="top:443.7px;font-size:11px;color:#22228a;letter-spacing:0.536px;left:877.60px;text-shadow:0.4px 0 0 rgba(34,34,138,0.4);">daj</div>
<div class="t" style="top:443.7px;font-size:11px;color:#22228a;letter-spacing:0.534px;left:919.40px;text-shadow:0.4px 0 0 rgba(34,34,138,0.4);">03.08.2020</div>
<div class="t" style="top:443.7px;font-size:11px;color:#22228a;letter-spacing:0.579px;left:992.80px;text-shadow:0.4px 0 0 rgba(34,34,138,0.4);">08:35:43</div>
<div class="t" style="top:443.7px;font-size:11px;color:#22228a;letter-spacing:0.751px;left:1056.20px;text-shadow:0.4px 0 0 rgba(34,34,138,0.4);">40</div>
<div class="t" style="top:443.7px;font-size:11px;color:#22228a;letter-spacing:-0.369px;left:1132.00px;text-shadow:0.4px 0 0 rgba(34,34,138,0.4);">ANF</div>
<div class="t" style="top:443.7px;font-size:11px;color:#22228a;letter-spacing:0.615px;left:1176.20px;text-shadow:0.4px 0 0 rgba(34,34,138,0.4);">100421</div>
<div class="t" style="top:443.7px;font-size:11px;color:#22228a;letter-spacing:0.751px;left:1235.40px;text-shadow:0.4px 0 0 rgba(34,34,138,0.4);">95</div>
<div class="t" style="top:443.7px;font-size:11px;color:#22228a;letter-spacing:0.668px;left:1296.80px;text-shadow:0.4px 0 0 rgba(34,34,138,0.4);">Zimmermann</div>
<div class="t" style="top:443.7px;font-size:11px;color:#22228a;letter-spacing:0.676px;left:1408.80px;text-shadow:0.4px 0 0 rgba(34,34,138,0.4);">525</div>
<div class="t" style="top:443.7px;font-size:11px;color:#22228a;letter-spacing:0.333px;left:1476.80px;text-shadow:0.4px 0 0 rgba(34,34,138,0.4);">Ar</div>
<div style="left:242.00px;top:503.00px;width:890.00px;height:7.50px;background:#a9a9a9;"></div>
</div>
<div style="left:237.00px;top:520.00px;width:1257.00px;height:20.00px;background:#436288;"></div>
<div style="left:237.00px;top:540.00px;width:1257.00px;height:109.40px;background:#fff;"></div>
<div style="left:237.00px;top:649.40px;width:1258.00px;height:1.30px;background:#d2d1cc;"></div>
<div style="left:1494.00px;top:520.00px;width:1.20px;height:130.40px;background:#d2d1cc;"></div>
<svg style="left:241.00px;top:521.00px" width="16" height="18" viewBox="0 0 16 18"><path d="M0.3 0.3 h8.8 l3.7 3.7 v12.6 h-12.5z" fill="#eaf3fb"/><rect x="1.2" y="5.3" width="10.5" height="10.5" fill="#52b818"/><path d="M1.5 10.5 l3 -1.2 l2.5 0.6 l2.5 -2.8" stroke="#a0e070" stroke-width="1" fill="none"/><circle cx="10.8" cy="12.4" r="4.3" fill="#5cbc28"/><path d="M8.7 12.5 l1.5 1.5 l2.8 -2.9" stroke="#fff" stroke-width="1.3" fill="none"/></svg>
<div class="t" style="top:523.5px;font-size:11px;color:#fff;letter-spacing:0.700px;left:256.20px;text-shadow:0.4px 0 0 rgba(255,255,255,0.4);">(0) Letzte CRM-Vorgänge&nbsp;&nbsp;(11.02.2021 09:47:00)</div>
<svg style="left:1460.80px;top:523.80px" width="7.3" height="6" viewBox="0 0 7.3 6"><path d="M0 0 h7.3 l-3.65 6z" fill="#fff"/></svg>
<svg style="left:1471.00px;top:522.00px" width="8" height="4" viewBox="0 0 8 4"><rect x="0.6" y="0.6" width="6.8" height="2.8" rx="0.8" fill="#fff" stroke="#234a20" stroke-width="0.9"/></svg>
<svg style="left:1481.50px;top:522.00px" width="8.5" height="7" viewBox="0 0 8.5 7"><rect x="2.8" y="0.5" width="5.2" height="3" rx="0.8" fill="#fff" stroke="#234a20" stroke-width="0.9"/><rect x="0.5" y="3.5" width="5.2" height="3" rx="0.8" fill="#fff" stroke="#234a20" stroke-width="0.9"/></svg>
<div style="left:241.50px;top:545.00px;width:1248.00px;height:99.50px;background:#fff;box-shadow: inset 0 0 0 1px #e2e1dc;"></div>
<div style="left:1489.80px;top:638.80px;width:1.80px;height:1.80px;background:#bdbcb4;"></div>
<div style="left:1489.80px;top:642.30px;width:1.80px;height:1.80px;background:#bdbcb4;"></div>
<div style="left:1483.30px;top:645.80px;width:1.80px;height:1.80px;background:#bdbcb4;"></div>
<div style="left:1486.80px;top:645.80px;width:1.80px;height:1.80px;background:#bdbcb4;"></div>
<div style="left:1489.80px;top:645.80px;width:1.80px;height:1.80px;background:#bdbcb4;"></div>
<div style="left:0;top:0;width:1500px;height:938px;clip-path:inset(545.5px 11.200000000000045px 294px 242px)">
<div style="left:242.00px;top:546.00px;width:23.60px;height:18.50px;background:#d4d3ce;"></div>
<div class="t" style="top:549.8px;font-size:11px;color:#3b3832;letter-spacing:-0.608px;left:246.00px;text-shadow:0.4px 0 0 rgba(59,56,50,0.4);">S</div>
<svg style="left:255.60px;top:550.80px" width="8.5" height="9.8" viewBox="0 0 8.5 9.8"><rect x="0" y="0" width="8.5" height="9.8" fill="#a8d4f4"/><rect x="0" y="0" width="8.5" height="1.3" fill="#4aa6e8"/><path d="M2.1 1 v8.8 M4.2 1 v8.8 M6.3 1 v8.8 M0 3.6 h8.5 M0 5.9 h8.5 M0 8.2 h8.5" stroke="#d8ecfa" stroke-width="0.6"/></svg>
<div style="left:266.70px;top:546.00px;width:33.10px;height:18.50px;background:#d4d3ce;"></div>
<div class="t" style="top:549.8px;font-size:11px;color:#3b3832;letter-spacing:0.031px;left:270.70px;text-shadow:0.4px 0 0 rgba(59,56,50,0.4);">Ers</div>
<svg style="left:289.80px;top:550.80px" width="8.5" height="9.8" viewBox="0 0 8.5 9.8"><rect x="0" y="0" width="8.5" height="9.8" fill="#a8d4f4"/><rect x="0" y="0" width="8.5" height="1.3" fill="#4aa6e8"/><path d="M2.1 1 v8.8 M4.2 1 v8.8 M6.3 1 v8.8 M0 3.6 h8.5 M0 5.9 h8.5 M0 8.2 h8.5" stroke="#d8ecfa" stroke-width="0.6"/></svg>
<div style="left:300.90px;top:546.00px;width:71.70px;height:18.50px;background:#d4d3ce;"></div>
<div class="t" style="top:549.8px;font-size:11px;color:#3b3832;letter-spacing:0.545px;left:304.90px;text-shadow:0.4px 0 0 rgba(59,56,50,0.4);">ErstDatum</div>
<svg style="left:362.60px;top:550.80px" width="8.5" height="9.8" viewBox="0 0 8.5 9.8"><rect x="0" y="0" width="8.5" height="9.8" fill="#a8d4f4"/><rect x="0" y="0" width="8.5" height="1.3" fill="#4aa6e8"/><path d="M2.1 1 v8.8 M4.2 1 v8.8 M6.3 1 v8.8 M0 3.6 h8.5 M0 5.9 h8.5 M0 8.2 h8.5" stroke="#d8ecfa" stroke-width="0.6"/></svg>
<div style="left:373.70px;top:546.00px;width:57.70px;height:18.50px;background:#d4d3ce;"></div>
<div class="t" style="top:549.8px;font-size:11px;color:#3b3832;letter-spacing:0.728px;left:377.70px;text-shadow:0.4px 0 0 rgba(59,56,50,0.4);">Zeit</div>
<svg style="left:421.40px;top:550.80px" width="8.5" height="9.8" viewBox="0 0 8.5 9.8"><rect x="0" y="0" width="8.5" height="9.8" fill="#a8d4f4"/><rect x="0" y="0" width="8.5" height="1.3" fill="#4aa6e8"/><path d="M2.1 1 v8.8 M4.2 1 v8.8 M6.3 1 v8.8 M0 3.6 h8.5 M0 5.9 h8.5 M0 8.2 h8.5" stroke="#d8ecfa" stroke-width="0.6"/></svg>
<div style="left:432.50px;top:546.00px;width:38.10px;height:18.50px;background:#d4d3ce;"></div>
<div class="t" style="top:549.8px;font-size:11px;color:#3b3832;letter-spacing:-0.415px;left:436.50px;text-shadow:0.4px 0 0 rgba(59,56,50,0.4);">VGS</div>
<svg style="left:460.60px;top:550.80px" width="8.5" height="9.8" viewBox="0 0 8.5 9.8"><rect x="0" y="0" width="8.5" height="9.8" fill="#a8d4f4"/><rect x="0" y="0" width="8.5" height="1.3" fill="#4aa6e8"/><path d="M2.1 1 v8.8 M4.2 1 v8.8 M6.3 1 v8.8 M0 3.6 h8.5 M0 5.9 h8.5 M0 8.2 h8.5" stroke="#d8ecfa" stroke-width="0.6"/></svg>
<div style="left:471.70px;top:546.00px;width:77.90px;height:18.50px;background:#d4d3ce;"></div>
<div class="t" style="top:549.8px;font-size:11px;color:#3b3832;letter-spacing:0.385px;left:475.70px;text-shadow:0.4px 0 0 rgba(59,56,50,0.4);">Ticket-Nr</div>
<svg style="left:539.60px;top:550.80px" width="8.5" height="9.8" viewBox="0 0 8.5 9.8"><rect x="0" y="0" width="8.5" height="9.8" fill="#a8d4f4"/><rect x="0" y="0" width="8.5" height="1.3" fill="#4aa6e8"/><path d="M2.1 1 v8.8 M4.2 1 v8.8 M6.3 1 v8.8 M0 3.6 h8.5 M0 5.9 h8.5 M0 8.2 h8.5" stroke="#d8ecfa" stroke-width="0.6"/></svg>
<div style="left:550.70px;top:546.00px;width:78.10px;height:18.50px;background:#d4d3ce;"></div>
<div class="t" style="top:549.8px;font-size:11px;color:#3b3832;letter-spacing:-0.038px;left:554.70px;text-shadow:0.4px 0 0 rgba(59,56,50,0.4);">Er-ID</div>
<svg style="left:618.80px;top:550.80px" width="8.5" height="9.8" viewBox="0 0 8.5 9.8"><rect x="0" y="0" width="8.5" height="9.8" fill="#a8d4f4"/><rect x="0" y="0" width="8.5" height="1.3" fill="#4aa6e8"/><path d="M2.1 1 v8.8 M4.2 1 v8.8 M6.3 1 v8.8 M0 3.6 h8.5 M0 5.9 h8.5 M0 8.2 h8.5" stroke="#d8ecfa" stroke-width="0.6"/></svg>
<div style="left:629.90px;top:546.00px;width:661.00px;height:18.50px;background:#d4d3ce;"></div>
<div class="t" style="top:549.8px;font-size:11px;color:#3b3832;letter-spacing:0.234px;left:633.90px;text-shadow:0.4px 0 0 rgba(59,56,50,0.4);">Ereignis-Text</div>
<svg style="left:1280.90px;top:550.80px" width="8.5" height="9.8" viewBox="0 0 8.5 9.8"><rect x="0" y="0" width="8.5" height="9.8" fill="#a8d4f4"/><rect x="0" y="0" width="8.5" height="1.3" fill="#4aa6e8"/><path d="M2.1 1 v8.8 M4.2 1 v8.8 M6.3 1 v8.8 M0 3.6 h8.5 M0 5.9 h8.5 M0 8.2 h8.5" stroke="#d8ecfa" stroke-width="0.6"/></svg>
<div style="left:1292.00px;top:546.00px;width:70.90px;height:18.50px;background:#d4d3ce;"></div>
<div class="t" style="top:549.8px;font-size:11px;color:#3b3832;letter-spacing:0.399px;left:1296.00px;text-shadow:0.4px 0 0 rgba(59,56,50,0.4);">Kundnr</div>
<svg style="left:1352.90px;top:550.80px" width="8.5" height="9.8" viewBox="0 0 8.5 9.8"><rect x="0" y="0" width="8.5" height="9.8" fill="#a8d4f4"/><rect x="0" y="0" width="8.5" height="1.3" fill="#4aa6e8"/><path d="M2.1 1 v8.8 M4.2 1 v8.8 M6.3 1 v8.8 M0 3.6 h8.5 M0 5.9 h8.5 M0 8.2 h8.5" stroke="#d8ecfa" stroke-width="0.6"/></svg>
<div style="left:1364.00px;top:546.00px;width:174.40px;height:18.50px;background:#d4d3ce;"></div>
<div class="t" style="top:549.8px;font-size:11px;color:#3b3832;letter-spacing:0.512px;left:1368.00px;text-shadow:0.4px 0 0 rgba(59,56,50,0.4);">Ansprechpartner</div>
<svg style="left:1528.40px;top:550.80px" width="8.5" height="9.8" viewBox="0 0 8.5 9.8"><rect x="0" y="0" width="8.5" height="9.8" fill="#a8d4f4"/><rect x="0" y="0" width="8.5" height="1.3" fill="#4aa6e8"/><path d="M2.1 1 v8.8 M4.2 1 v8.8 M6.3 1 v8.8 M0 3.6 h8.5 M0 5.9 h8.5 M0 8.2 h8.5" stroke="#d8ecfa" stroke-width="0.6"/></svg>
<div style="left:242.00px;top:636.00px;width:1116.70px;height:7.50px;background:#a9a9a9;"></div>
</div>
<div style="left:237.00px;top:652.80px;width:1257.00px;height:20.00px;background:#436288;"></div>
<div style="left:237.00px;top:672.80px;width:1257.00px;height:239.20px;background:#fff;"></div>
<div style="left:237.00px;top:912.00px;width:1258.00px;height:1.30px;background:#d2d1cc;"></div>
<div style="left:1494.00px;top:652.80px;width:1.20px;height:260.20px;background:#d2d1cc;"></div>
<svg style="left:241.00px;top:654.30px" width="15" height="17" viewBox="0 0 15 17"><rect x="0.3" y="0.2" width="12.4" height="16.2" fill="#e8f2fa"/><rect x="1.2" y="5.2" width="10.8" height="10.3" fill="#52b818"/><path d="M1.5 11.5 l3 -1.5 l2.5 0.8 l2.5 -3 M7.5 15 l2.5 -5" stroke="#a0e070" stroke-width="1" fill="none"/><circle cx="10.6" cy="4" r="3.7" fill="#ec6a66"/><rect x="10.2" y="2.5" width="1.6" height="2.5" fill="#f6a8a4"/></svg>
<div class="t" style="top:656.3px;font-size:11px;color:#fff;letter-spacing:0.770px;left:256.20px;text-shadow:0.4px 0 0 rgba(255,255,255,0.4);">(4) offene Aufgaben&nbsp;&nbsp;(11.02.2021 14:24:46)</div>
<svg style="left:1460.80px;top:656.60px" width="7.3" height="6" viewBox="0 0 7.3 6"><path d="M0 0 h7.3 l-3.65 6z" fill="#fff"/></svg>
<svg style="left:1471.00px;top:654.80px" width="8" height="4" viewBox="0 0 8 4"><rect x="0.6" y="0.6" width="6.8" height="2.8" rx="0.8" fill="#fff" stroke="#234a20" stroke-width="0.9"/></svg>
<svg style="left:1481.50px;top:654.80px" width="8.5" height="7" viewBox="0 0 8.5 7"><rect x="2.8" y="0.5" width="5.2" height="3" rx="0.8" fill="#fff" stroke="#234a20" stroke-width="0.9"/><rect x="0.5" y="3.5" width="5.2" height="3" rx="0.8" fill="#fff" stroke="#234a20" stroke-width="0.9"/></svg>
<div style="left:241.50px;top:678.20px;width:1248.00px;height:228.20px;background:#fff;box-shadow: inset 0 0 0 1px #e2e1dc;"></div>
<div style="left:1489.80px;top:900.80px;width:1.80px;height:1.80px;background:#bdbcb4;"></div>
<div style="left:1489.80px;top:904.30px;width:1.80px;height:1.80px;background:#bdbcb4;"></div>
<div style="left:1483.30px;top:907.80px;width:1.80px;height:1.80px;background:#bdbcb4;"></div>
<div style="left:1486.80px;top:907.80px;width:1.80px;height:1.80px;background:#bdbcb4;"></div>
<div style="left:1489.80px;top:907.80px;width:1.80px;height:1.80px;background:#bdbcb4;"></div>
<div style="left:242.00px;top:679.20px;width:34.80px;height:17.60px;background:#d4d3ce;"></div>
<div class="t" style="top:683.0px;font-size:11px;color:#3b3832;letter-spacing:-0.301px;left:246.00px;text-shadow:0.4px 0 0 rgba(59,56,50,0.4);">BK</div>
<svg style="left:266.80px;top:684.00px" width="8.5" height="9.8" viewBox="0 0 8.5 9.8"><rect x="0" y="0" width="8.5" height="9.8" fill="#a8d4f4"/><rect x="0" y="0" width="8.5" height="1.3" fill="#4aa6e8"/><path d="M2.1 1 v8.8 M4.2 1 v8.8 M6.3 1 v8.8 M0 3.6 h8.5 M0 5.9 h8.5 M0 8.2 h8.5" stroke="#d8ecfa" stroke-width="0.6"/></svg>
<div style="left:277.90px;top:679.20px;width:33.70px;height:17.60px;background:#d4d3ce;"></div>
<div class="t" style="top:683.0px;font-size:11px;color:#3b3832;letter-spacing:-0.684px;left:281.90px;text-shadow:0.4px 0 0 rgba(59,56,50,0.4);">EK</div>
<svg style="left:301.60px;top:684.00px" width="8.5" height="9.8" viewBox="0 0 8.5 9.8"><rect x="0" y="0" width="8.5" height="9.8" fill="#a8d4f4"/><rect x="0" y="0" width="8.5" height="1.3" fill="#4aa6e8"/><path d="M2.1 1 v8.8 M4.2 1 v8.8 M6.3 1 v8.8 M0 3.6 h8.5 M0 5.9 h8.5 M0 8.2 h8.5" stroke="#d8ecfa" stroke-width="0.6"/></svg>
<div style="left:312.70px;top:679.20px;width:28.60px;height:17.60px;background:#d4d3ce;"></div>
<div class="t" style="top:683.0px;font-size:11px;color:#3b3832;letter-spacing:-0.608px;left:316.70px;text-shadow:0.4px 0 0 rgba(59,56,50,0.4);">S</div>
<svg style="left:331.30px;top:684.00px" width="8.5" height="9.8" viewBox="0 0 8.5 9.8"><rect x="0" y="0" width="8.5" height="9.8" fill="#a8d4f4"/><rect x="0" y="0" width="8.5" height="1.3" fill="#4aa6e8"/><path d="M2.1 1 v8.8 M4.2 1 v8.8 M6.3 1 v8.8 M0 3.6 h8.5 M0 5.9 h8.5 M0 8.2 h8.5" stroke="#d8ecfa" stroke-width="0.6"/></svg>
<div style="left:342.40px;top:679.20px;width:66.60px;height:17.60px;background:#d4d3ce;"></div>
<div class="t" style="top:683.0px;font-size:11px;color:#3b3832;letter-spacing:0.352px;left:346.40px;text-shadow:0.4px 0 0 rgba(59,56,50,0.4);">Fälligdat</div>
<svg style="left:399.00px;top:684.00px" width="8.5" height="9.8" viewBox="0 0 8.5 9.8"><rect x="0" y="0" width="8.5" height="9.8" fill="#a8d4f4"/><rect x="0" y="0" width="8.5" height="1.3" fill="#4aa6e8"/><path d="M2.1 1 v8.8 M4.2 1 v8.8 M6.3 1 v8.8 M0 3.6 h8.5 M0 5.9 h8.5 M0 8.2 h8.5" stroke="#d8ecfa" stroke-width="0.6"/></svg>
<div style="left:410.10px;top:679.20px;width:89.90px;height:17.60px;background:#d4d3ce;"></div>
<div class="t" style="top:683.0px;font-size:11px;color:#3b3832;letter-spacing:0.442px;left:414.10px;text-shadow:0.4px 0 0 rgba(59,56,50,0.4);">Maskenname</div>
<svg style="left:490.00px;top:684.00px" width="8.5" height="9.8" viewBox="0 0 8.5 9.8"><rect x="0" y="0" width="8.5" height="9.8" fill="#a8d4f4"/><rect x="0" y="0" width="8.5" height="1.3" fill="#4aa6e8"/><path d="M2.1 1 v8.8 M4.2 1 v8.8 M6.3 1 v8.8 M0 3.6 h8.5 M0 5.9 h8.5 M0 8.2 h8.5" stroke="#d8ecfa" stroke-width="0.6"/></svg>
<div style="left:501.10px;top:679.20px;width:42.30px;height:17.60px;background:#d4d3ce;"></div>
<div class="t" style="top:683.0px;font-size:11px;color:#3b3832;letter-spacing:0.106px;left:505.10px;text-shadow:0.4px 0 0 rgba(59,56,50,0.4);">Key</div>
<svg style="left:533.40px;top:684.00px" width="8.5" height="9.8" viewBox="0 0 8.5 9.8"><rect x="0" y="0" width="8.5" height="9.8" fill="#a8d4f4"/><rect x="0" y="0" width="8.5" height="1.3" fill="#4aa6e8"/><path d="M2.1 1 v8.8 M4.2 1 v8.8 M6.3 1 v8.8 M0 3.6 h8.5 M0 5.9 h8.5 M0 8.2 h8.5" stroke="#d8ecfa" stroke-width="0.6"/></svg>
<div style="left:544.50px;top:679.20px;width:255.90px;height:17.60px;background:#d4d3ce;"></div>
<div class="t" style="top:683.0px;font-size:11px;color:#3b3832;letter-spacing:0.472px;left:548.50px;text-shadow:0.4px 0 0 rgba(59,56,50,0.4);">Beschreibung Aufgabe</div>
<svg style="left:790.40px;top:684.00px" width="8.5" height="9.8" viewBox="0 0 8.5 9.8"><rect x="0" y="0" width="8.5" height="9.8" fill="#a8d4f4"/><rect x="0" y="0" width="8.5" height="1.3" fill="#4aa6e8"/><path d="M2.1 1 v8.8 M4.2 1 v8.8 M6.3 1 v8.8 M0 3.6 h8.5 M0 5.9 h8.5 M0 8.2 h8.5" stroke="#d8ecfa" stroke-width="0.6"/></svg>
<div style="left:801.50px;top:679.20px;width:79.30px;height:17.60px;background:#d4d3ce;"></div>
<div class="t" style="top:683.0px;font-size:11px;color:#3b3832;letter-spacing:0.556px;left:805.50px;text-shadow:0.4px 0 0 rgba(59,56,50,0.4);">Bemerkung</div>
<svg style="left:870.80px;top:684.00px" width="8.5" height="9.8" viewBox="0 0 8.5 9.8"><rect x="0" y="0" width="8.5" height="9.8" fill="#a8d4f4"/><rect x="0" y="0" width="8.5" height="1.3" fill="#4aa6e8"/><path d="M2.1 1 v8.8 M4.2 1 v8.8 M6.3 1 v8.8 M0 3.6 h8.5 M0 5.9 h8.5 M0 8.2 h8.5" stroke="#d8ecfa" stroke-width="0.6"/></svg>
<div style="left:881.90px;top:679.20px;width:52.10px;height:17.60px;background:#d4d3ce;"></div>
<div class="t" style="top:683.0px;font-size:11px;color:#3b3832;letter-spacing:0.344px;left:885.90px;text-shadow:0.4px 0 0 rgba(59,56,50,0.4);">AuBer</div>
<svg style="left:924.00px;top:684.00px" width="8.5" height="9.8" viewBox="0 0 8.5 9.8"><rect x="0" y="0" width="8.5" height="9.8" fill="#a8d4f4"/><rect x="0" y="0" width="8.5" height="1.3" fill="#4aa6e8"/><path d="M2.1 1 v8.8 M4.2 1 v8.8 M6.3 1 v8.8 M0 3.6 h8.5 M0 5.9 h8.5 M0 8.2 h8.5" stroke="#d8ecfa" stroke-width="0.6"/></svg>
<div style="left:935.10px;top:679.20px;width:40.30px;height:17.60px;background:#d4d3ce;"></div>
<div class="t" style="top:683.0px;font-size:11px;color:#3b3832;letter-spacing:0.145px;left:939.10px;text-shadow:0.4px 0 0 rgba(59,56,50,0.4);">Bes</div>
<svg style="left:965.40px;top:684.00px" width="8.5" height="9.8" viewBox="0 0 8.5 9.8"><rect x="0" y="0" width="8.5" height="9.8" fill="#a8d4f4"/><rect x="0" y="0" width="8.5" height="1.3" fill="#4aa6e8"/><path d="M2.1 1 v8.8 M4.2 1 v8.8 M6.3 1 v8.8 M0 3.6 h8.5 M0 5.9 h8.5 M0 8.2 h8.5" stroke="#d8ecfa" stroke-width="0.6"/></svg>
<div style="left:976.50px;top:679.20px;width:83.10px;height:17.60px;background:#d4d3ce;"></div>
<div class="t" style="top:683.0px;font-size:11px;color:#3b3832;letter-spacing:0.551px;left:980.50px;text-shadow:0.4px 0 0 rgba(59,56,50,0.4);">Best Datum</div>
<svg style="left:1049.60px;top:684.00px" width="8.5" height="9.8" viewBox="0 0 8.5 9.8"><rect x="0" y="0" width="8.5" height="9.8" fill="#a8d4f4"/><rect x="0" y="0" width="8.5" height="1.3" fill="#4aa6e8"/><path d="M2.1 1 v8.8 M4.2 1 v8.8 M6.3 1 v8.8 M0 3.6 h8.5 M0 5.9 h8.5 M0 8.2 h8.5" stroke="#d8ecfa" stroke-width="0.6"/></svg>
<div style="left:1060.70px;top:679.20px;width:33.90px;height:17.60px;background:#d4d3ce;"></div>
<div class="t" style="top:683.0px;font-size:11px;color:#3b3832;letter-spacing:0.222px;left:1064.70px;text-shadow:0.4px 0 0 rgba(59,56,50,0.4);">Erl</div>
<svg style="left:1084.60px;top:684.00px" width="8.5" height="9.8" viewBox="0 0 8.5 9.8"><rect x="0" y="0" width="8.5" height="9.8" fill="#a8d4f4"/><rect x="0" y="0" width="8.5" height="1.3" fill="#4aa6e8"/><path d="M2.1 1 v8.8 M4.2 1 v8.8 M6.3 1 v8.8 M0 3.6 h8.5 M0 5.9 h8.5 M0 8.2 h8.5" stroke="#d8ecfa" stroke-width="0.6"/></svg>
<div style="left:1095.70px;top:679.20px;width:79.30px;height:17.60px;background:#d4d3ce;"></div>
<div class="t" style="top:683.0px;font-size:11px;color:#3b3832;letter-spacing:0.520px;left:1099.70px;text-shadow:0.4px 0 0 rgba(59,56,50,0.4);">Erld Datum</div>
<svg style="left:1165.00px;top:684.00px" width="8.5" height="9.8" viewBox="0 0 8.5 9.8"><rect x="0" y="0" width="8.5" height="9.8" fill="#a8d4f4"/><rect x="0" y="0" width="8.5" height="1.3" fill="#4aa6e8"/><path d="M2.1 1 v8.8 M4.2 1 v8.8 M6.3 1 v8.8 M0 3.6 h8.5 M0 5.9 h8.5 M0 8.2 h8.5" stroke="#d8ecfa" stroke-width="0.6"/></svg>
<div style="left:1176.10px;top:679.20px;width:40.60px;height:17.60px;background:#d4d3ce;"></div>
<div class="t" style="top:683.0px;font-size:11px;color:#3b3832;letter-spacing:-0.071px;left:1180.10px;text-shadow:0.4px 0 0 rgba(59,56,50,0.4);">Koo</div>
<svg style="left:1206.70px;top:684.00px" width="8.5" height="9.8" viewBox="0 0 8.5 9.8"><rect x="0" y="0" width="8.5" height="9.8" fill="#a8d4f4"/><rect x="0" y="0" width="8.5" height="1.3" fill="#4aa6e8"/><path d="M2.1 1 v8.8 M4.2 1 v8.8 M6.3 1 v8.8 M0 3.6 h8.5 M0 5.9 h8.5 M0 8.2 h8.5" stroke="#d8ecfa" stroke-width="0.6"/></svg>
<div style="left:1217.80px;top:679.20px;width:65.50px;height:17.60px;background:#d4d3ce;"></div>
<div class="t" style="top:683.0px;font-size:11px;color:#3b3832;letter-spacing:0.409px;left:1221.80px;text-shadow:0.4px 0 0 rgba(59,56,50,0.4);">SZ Aufg</div>
<svg style="left:1273.30px;top:684.00px" width="8.5" height="9.8" viewBox="0 0 8.5 9.8"><rect x="0" y="0" width="8.5" height="9.8" fill="#a8d4f4"/><rect x="0" y="0" width="8.5" height="1.3" fill="#4aa6e8"/><path d="M2.1 1 v8.8 M4.2 1 v8.8 M6.3 1 v8.8 M0 3.6 h8.5 M0 5.9 h8.5 M0 8.2 h8.5" stroke="#d8ecfa" stroke-width="0.6"/></svg>
<div style="left:1284.40px;top:679.20px;width:60.20px;height:17.60px;background:#d4d3ce;"></div>
<div class="t" style="top:683.0px;font-size:11px;color:#3b3832;letter-spacing:0.513px;left:1288.40px;text-shadow:0.4px 0 0 rgba(59,56,50,0.4);">IZ Aufg</div>
<svg style="left:1334.60px;top:684.00px" width="8.5" height="9.8" viewBox="0 0 8.5 9.8"><rect x="0" y="0" width="8.5" height="9.8" fill="#a8d4f4"/><rect x="0" y="0" width="8.5" height="1.3" fill="#4aa6e8"/><path d="M2.1 1 v8.8 M4.2 1 v8.8 M6.3 1 v8.8 M0 3.6 h8.5 M0 5.9 h8.5 M0 8.2 h8.5" stroke="#d8ecfa" stroke-width="0.6"/></svg>
<div style="left:1345.70px;top:679.20px;width:45.50px;height:17.60px;background:#d4d3ce;"></div>
<div class="t" style="top:683.0px;font-size:11px;color:#3b3832;letter-spacing:0.242px;left:1349.70px;text-shadow:0.4px 0 0 rgba(59,56,50,0.4);">Erl%</div>
<svg style="left:1381.20px;top:684.00px" width="8.5" height="9.8" viewBox="0 0 8.5 9.8"><rect x="0" y="0" width="8.5" height="9.8" fill="#a8d4f4"/><rect x="0" y="0" width="8.5" height="1.3" fill="#4aa6e8"/><path d="M2.1 1 v8.8 M4.2 1 v8.8 M6.3 1 v8.8 M0 3.6 h8.5 M0 5.9 h8.5 M0 8.2 h8.5" stroke="#d8ecfa" stroke-width="0.6"/></svg>
<div style="left:1392.30px;top:679.20px;width:34.50px;height:17.60px;background:#d4d3ce;"></div>
<div class="t" style="top:683.0px;font-size:11px;color:#3b3832;letter-spacing:-0.472px;left:1396.30px;text-shadow:0.4px 0 0 rgba(59,56,50,0.4);">AF</div>
<svg style="left:1416.80px;top:684.00px" width="8.5" height="9.8" viewBox="0 0 8.5 9.8"><rect x="0" y="0" width="8.5" height="9.8" fill="#a8d4f4"/><rect x="0" y="0" width="8.5" height="1.3" fill="#4aa6e8"/><path d="M2.1 1 v8.8 M4.2 1 v8.8 M6.3 1 v8.8 M0 3.6 h8.5 M0 5.9 h8.5 M0 8.2 h8.5" stroke="#d8ecfa" stroke-width="0.6"/></svg>
<div style="left:1427.90px;top:679.20px;width:33.90px;height:17.60px;background:#d4d3ce;"></div>
<div class="t" style="top:683.0px;font-size:11px;color:#3b3832;letter-spacing:-0.800px;left:1431.90px;text-shadow:0.4px 0 0 rgba(59,56,50,0.4);">RF</div>
<svg style="left:1451.80px;top:684.00px" width="8.5" height="9.8" viewBox="0 0 8.5 9.8"><rect x="0" y="0" width="8.5" height="9.8" fill="#a8d4f4"/><rect x="0" y="0" width="8.5" height="1.3" fill="#4aa6e8"/><path d="M2.1 1 v8.8 M4.2 1 v8.8 M6.3 1 v8.8 M0 3.6 h8.5 M0 5.9 h8.5 M0 8.2 h8.5" stroke="#d8ecfa" stroke-width="0.6"/></svg>
<div style="left:242.80px;top:698.00px;width:34.00px;height:15.20px;background:#fff;"></div>
<div style="left:277.90px;top:698.00px;width:33.70px;height:15.20px;background:#fff;"></div>
<div style="left:312.70px;top:698.00px;width:28.60px;height:15.20px;background:#f8f8fe;"></div>
<div style="left:342.40px;top:698.00px;width:66.60px;height:15.20px;background:#ebebe6;"></div>
<div style="left:410.10px;top:698.00px;width:89.90px;height:15.20px;background:#fdfad8;"></div>
<div style="left:501.10px;top:698.00px;width:42.30px;height:15.20px;background:#ebebe6;"></div>
<div style="left:544.50px;top:698.00px;width:255.90px;height:15.20px;background:#ebebe6;"></div>
<div style="left:801.50px;top:698.00px;width:79.30px;height:15.20px;background:#fdfad8;"></div>
<div style="left:881.90px;top:698.00px;width:52.10px;height:15.20px;background:#ebebe6;"></div>
<div style="left:935.10px;top:698.00px;width:40.30px;height:15.20px;background:#ebebe6;"></div>
<div style="left:976.50px;top:698.00px;width:83.10px;height:15.20px;background:#ebebe6;"></div>
<div style="left:1060.70px;top:698.00px;width:33.90px;height:15.20px;background:#ebebe6;"></div>
<div style="left:1095.70px;top:698.00px;width:79.30px;height:15.20px;background:#ebebe6;"></div>
<div style="left:1176.10px;top:698.00px;width:40.60px;height:15.20px;background:#ebebe6;"></div>
<div style="left:1217.80px;top:698.00px;width:65.50px;height:15.20px;background:#ebebe6;"></div>
<div style="left:1284.40px;top:698.00px;width:60.20px;height:15.20px;background:#ebebe6;"></div>
<div style="left:1345.70px;top:698.00px;width:45.50px;height:15.20px;background:#ebebe6;"></div>
<div style="left:1392.30px;top:698.00px;width:34.50px;height:15.20px;background:#ebebe6;"></div>
<div style="left:1427.90px;top:698.00px;width:33.90px;height:15.20px;background:#ebebe6;"></div>
<div style="left:242.80px;top:714.60px;width:34.00px;height:15.20px;background:#fff;"></div>
<div style="left:277.90px;top:714.60px;width:33.70px;height:15.20px;background:#fff;"></div>
<div style="left:312.70px;top:714.60px;width:28.60px;height:15.20px;background:#f8f8fe;"></div>
<div style="left:342.40px;top:714.60px;width:66.60px;height:15.20px;background:#ebebe6;"></div>
<div style="left:410.10px;top:714.60px;width:89.90px;height:15.20px;background:#fdfad8;"></div>
<div style="left:501.10px;top:714.60px;width:42.30px;height:15.20px;background:#ebebe6;"></div>
<div style="left:544.50px;top:714.60px;width:255.90px;height:15.20px;background:#ebebe6;"></div>
<div style="left:801.50px;top:714.60px;width:79.30px;height:15.20px;background:#fdfad8;"></div>
<div style="left:881.90px;top:714.60px;width:52.10px;height:15.20px;background:#ebebe6;"></div>
<div style="left:935.10px;top:714.60px;width:40.30px;height:15.20px;background:#ebebe6;"></div>
<div style="left:976.50px;top:714.60px;width:83.10px;height:15.20px;background:#ebebe6;"></div>
<div style="left:1060.70px;top:714.60px;width:33.90px;height:15.20px;background:#ebebe6;"></div>
<div style="left:1095.70px;top:714.60px;width:79.30px;height:15.20px;background:#ebebe6;"></div>
<div style="left:1176.10px;top:714.60px;width:40.60px;height:15.20px;background:#ebebe6;"></div>
<div style="left:1217.80px;top:714.60px;width:65.50px;height:15.20px;background:#ebebe6;"></div>
<div style="left:1284.40px;top:714.60px;width:60.20px;height:15.20px;background:#ebebe6;"></div>
<div style="left:1345.70px;top:714.60px;width:45.50px;height:15.20px;background:#ebebe6;"></div>
<div style="left:1392.30px;top:714.60px;width:34.50px;height:15.20px;background:#ebebe6;"></div>
<div style="left:1427.90px;top:714.60px;width:33.90px;height:15.20px;background:#ebebe6;"></div>
<div style="left:242.80px;top:731.20px;width:34.00px;height:15.20px;background:#fff;"></div>
<div style="left:277.90px;top:731.20px;width:33.70px;height:15.20px;background:#fff;"></div>
<div style="left:312.70px;top:731.20px;width:28.60px;height:15.20px;background:#f8f8fe;"></div>
<div style="left:342.40px;top:731.20px;width:66.60px;height:15.20px;background:#ebebe6;"></div>
<div style="left:410.10px;top:731.20px;width:89.90px;height:15.20px;background:#fdfad8;"></div>
<div style="left:501.10px;top:731.20px;width:42.30px;height:15.20px;background:#ebebe6;"></div>
<div style="left:544.50px;top:731.20px;width:255.90px;height:15.20px;background:#ebebe6;"></div>
<div style="left:801.50px;top:731.20px;width:79.30px;height:15.20px;background:#fdfad8;"></div>
<div style="left:881.90px;top:731.20px;width:52.10px;height:15.20px;background:#ebebe6;"></div>
<div style="left:935.10px;top:731.20px;width:40.30px;height:15.20px;background:#ebebe6;"></div>
<div style="left:976.50px;top:731.20px;width:83.10px;height:15.20px;background:#ebebe6;"></div>
<div style="left:1060.70px;top:731.20px;width:33.90px;height:15.20px;background:#ebebe6;"></div>
<div style="left:1095.70px;top:731.20px;width:79.30px;height:15.20px;background:#ebebe6;"></div>
<div style="left:1176.10px;top:731.20px;width:40.60px;height:15.20px;background:#ebebe6;"></div>
<div style="left:1217.80px;top:731.20px;width:65.50px;height:15.20px;background:#ebebe6;"></div>
<div style="left:1284.40px;top:731.20px;width:60.20px;height:15.20px;background:#ebebe6;"></div>
<div style="left:1345.70px;top:731.20px;width:45.50px;height:15.20px;background:#ebebe6;"></div>
<div style="left:1392.30px;top:731.20px;width:34.50px;height:15.20px;background:#ebebe6;"></div>
<div style="left:1427.90px;top:731.20px;width:33.90px;height:15.20px;background:#ebebe6;"></div>
<div style="left:242.80px;top:747.80px;width:34.00px;height:15.20px;background:#fff;"></div>
<div style="left:277.90px;top:747.80px;width:33.70px;height:15.20px;background:#fff;"></div>
<div style="left:312.70px;top:747.80px;width:28.60px;height:15.20px;background:#f8f8fe;"></div>
<div style="left:342.40px;top:747.80px;width:66.60px;height:15.20px;background:#ebebe6;"></div>
<div style="left:410.10px;top:747.80px;width:89.90px;height:15.20px;background:#fdfad8;"></div>
<div style="left:501.10px;top:747.80px;width:42.30px;height:15.20px;background:#ebebe6;"></div>
<div style="left:544.50px;top:747.80px;width:255.90px;height:15.20px;background:#ebebe6;"></div>
<div style="left:801.50px;top:747.80px;width:79.30px;height:15.20px;background:#fdfad8;"></div>
<div style="left:881.90px;top:747.80px;width:52.10px;height:15.20px;background:#ebebe6;"></div>
<div style="left:935.10px;top:747.80px;width:40.30px;height:15.20px;background:#ebebe6;"></div>
<div style="left:976.50px;top:747.80px;width:83.10px;height:15.20px;background:#ebebe6;"></div>
<div style="left:1060.70px;top:747.80px;width:33.90px;height:15.20px;background:#ebebe6;"></div>
<div style="left:1095.70px;top:747.80px;width:79.30px;height:15.20px;background:#ebebe6;"></div>
<div style="left:1176.10px;top:747.80px;width:40.60px;height:15.20px;background:#ebebe6;"></div>
<div style="left:1217.80px;top:747.80px;width:65.50px;height:15.20px;background:#ebebe6;"></div>
<div style="left:1284.40px;top:747.80px;width:60.20px;height:15.20px;background:#ebebe6;"></div>
<div style="left:1345.70px;top:747.80px;width:45.50px;height:15.20px;background:#ebebe6;"></div>
<div style="left:1392.30px;top:747.80px;width:34.50px;height:15.20px;background:#ebebe6;"></div>
<div style="left:1427.90px;top:747.80px;width:33.90px;height:15.20px;background:#ebebe6;"></div>
<div style="left:242.80px;top:713.20px;width:69.00px;height:1.00px;background:#dddcd7;"></div>
<div style="left:245.00px;top:701.20px;width:10.00px;height:10.00px;background:#fafafa;box-shadow: inset 0 0 0 1px #d3d2cd;"></div>
<div style="left:280.20px;top:701.20px;width:10.00px;height:10.00px;background:#fafafa;box-shadow: inset 0 0 0 1px #d3d2cd;"></div>
<svg style="left:314.40px;top:700.20px" width="13.6" height="13" viewBox="0 0 13.6 13"><path d="M6.8 0.5 L13.3 12.5 H0.3z" fill="#f41c24" stroke="#d01018" stroke-width="0.5"/><rect x="6.1" y="4.5" width="1.4" height="4.5" fill="#600"/><rect x="6.1" y="10" width="1.4" height="1.5" fill="#600"/></svg>
<div class="t" style="top:700.0px;font-size:11px;color:#22228a;letter-spacing:0.902px;left:411.30px;text-shadow:0.4px 0 0 rgba(34,34,138,0.4);">mtst</div>
<div class="t" style="top:700.0px;font-size:11px;color:#22228a;letter-spacing:0.626px;left:502.00px;text-shadow:0.4px 0 0 rgba(34,34,138,0.4);">40300</div>
<div class="t" style="top:700.0px;font-size:11px;color:#22228a;letter-spacing:0.386px;left:545.70px;text-shadow:0.4px 0 0 rgba(34,34,138,0.4);">Preisanfrage</div>
<div class="t" style="top:700.0px;font-size:11px;color:#22228a;letter-spacing:-1.048px;left:883.00px;text-shadow:0.4px 0 0 rgba(34,34,138,0.4);">KT</div>
<div class="t" style="top:700.0px;font-size:11px;color:#22228a;letter-spacing:0.563px;right:217.44px;text-align:right;text-shadow:0.4px 0 0 rgba(34,34,138,0.4);">0,00</div>
<div style="left:242.80px;top:729.80px;width:69.00px;height:1.00px;background:#dddcd7;"></div>
<div style="left:245.00px;top:717.80px;width:10.00px;height:10.00px;background:#fafafa;box-shadow: inset 0 0 0 1px #d3d2cd;"></div>
<div style="left:280.20px;top:717.80px;width:10.00px;height:10.00px;background:#fafafa;box-shadow: inset 0 0 0 1px #d3d2cd;"></div>
<svg style="left:314.40px;top:716.80px" width="13.6" height="13" viewBox="0 0 13.6 13"><path d="M6.8 0.5 L13.3 12.5 H0.3z" fill="#f41c24" stroke="#d01018" stroke-width="0.5"/><rect x="6.1" y="4.5" width="1.4" height="4.5" fill="#600"/><rect x="6.1" y="10" width="1.4" height="1.5" fill="#600"/></svg>
<div class="t" style="top:716.6px;font-size:11px;color:#22228a;letter-spacing:0.902px;left:411.30px;text-shadow:0.4px 0 0 rgba(34,34,138,0.4);">mtst</div>
<div class="t" style="top:716.6px;font-size:11px;color:#22228a;letter-spacing:0.626px;left:502.00px;text-shadow:0.4px 0 0 rgba(34,34,138,0.4);">40300</div>
<div class="t" style="top:716.6px;font-size:11px;color:#22228a;letter-spacing:0.460px;left:545.70px;text-shadow:0.4px 0 0 rgba(34,34,138,0.4);">Preise einpflegen Herstellerdaten</div>
<div class="t" style="top:716.6px;font-size:11px;color:#22228a;letter-spacing:-1.048px;left:883.00px;text-shadow:0.4px 0 0 rgba(34,34,138,0.4);">KT</div>
<div class="t" style="top:716.6px;font-size:11px;color:#22228a;letter-spacing:0.563px;right:217.44px;text-align:right;text-shadow:0.4px 0 0 rgba(34,34,138,0.4);">0,00</div>
<div style="left:242.80px;top:746.40px;width:69.00px;height:1.00px;background:#dddcd7;"></div>
<div style="left:245.00px;top:734.40px;width:10.00px;height:10.00px;background:#fafafa;box-shadow: inset 0 0 0 1px #d3d2cd;"></div>
<div style="left:280.20px;top:734.40px;width:10.00px;height:10.00px;background:#fafafa;box-shadow: inset 0 0 0 1px #d3d2cd;"></div>
<svg style="left:314.40px;top:733.40px" width="13.6" height="13" viewBox="0 0 13.6 13"><path d="M6.8 0.5 L13.3 12.5 H0.3z" fill="#f41c24" stroke="#d01018" stroke-width="0.5"/><rect x="6.1" y="4.5" width="1.4" height="4.5" fill="#600"/><rect x="6.1" y="10" width="1.4" height="1.5" fill="#600"/></svg>
<div class="t" style="top:733.2px;font-size:11px;color:#22228a;letter-spacing:0.902px;left:411.30px;text-shadow:0.4px 0 0 rgba(34,34,138,0.4);">mtst</div>
<div class="t" style="top:733.2px;font-size:11px;color:#22228a;letter-spacing:0.615px;left:502.00px;text-shadow:0.4px 0 0 rgba(34,34,138,0.4);">400281</div>
<div class="t" style="top:733.2px;font-size:11px;color:#22228a;letter-spacing:0.452px;left:545.70px;text-shadow:0.4px 0 0 rgba(34,34,138,0.4);">Kalkulieren und bei Verkaufsteil UVP festlegen</div>
<div class="t" style="top:733.2px;font-size:11px;color:#22228a;letter-spacing:-0.672px;left:883.00px;text-shadow:0.4px 0 0 rgba(34,34,138,0.4);">ET</div>
<div class="t" style="top:733.2px;font-size:11px;color:#22228a;letter-spacing:0.563px;right:217.44px;text-align:right;text-shadow:0.4px 0 0 rgba(34,34,138,0.4);">1,00</div>
<div style="left:242.80px;top:763.00px;width:69.00px;height:1.00px;background:#dddcd7;"></div>
<div style="left:245.00px;top:751.00px;width:10.00px;height:10.00px;background:#fafafa;box-shadow: inset 0 0 0 1px #d3d2cd;"></div>
<div style="left:280.20px;top:751.00px;width:10.00px;height:10.00px;background:#fafafa;box-shadow: inset 0 0 0 1px #d3d2cd;"></div>
<svg style="left:314.40px;top:750.00px" width="13.6" height="13" viewBox="0 0 13.6 13"><path d="M6.8 0.5 L13.3 12.5 H0.3z" fill="#f41c24" stroke="#d01018" stroke-width="0.5"/><rect x="6.1" y="4.5" width="1.4" height="4.5" fill="#600"/><rect x="6.1" y="10" width="1.4" height="1.5" fill="#600"/></svg>
<div class="t" style="top:749.8px;font-size:11px;color:#22228a;letter-spacing:0.902px;left:411.30px;text-shadow:0.4px 0 0 rgba(34,34,138,0.4);">mtst</div>
<div class="t" style="top:749.8px;font-size:11px;color:#22228a;letter-spacing:0.626px;left:502.00px;text-shadow:0.4px 0 0 rgba(34,34,138,0.4);">40300</div>
<div class="t" style="top:749.8px;font-size:11px;color:#22228a;letter-spacing:0.405px;left:545.70px;text-shadow:0.4px 0 0 rgba(34,34,138,0.4);">Kalkulieren und bei Handelsware UVP festlegen</div>
<div class="t" style="top:749.8px;font-size:11px;color:#22228a;letter-spacing:-1.048px;left:883.00px;text-shadow:0.4px 0 0 rgba(34,34,138,0.4);">KT</div>
<div class="t" style="top:749.8px;font-size:11px;color:#22228a;letter-spacing:0.563px;right:217.44px;text-align:right;text-shadow:0.4px 0 0 rgba(34,34,138,0.4);">0,00</div>
<div class="t" style="top:921px;font-size:11px;color:#111;font-weight:700;letter-spacing:0.797px;left:2.20px;text-shadow:0.4px 0 0 rgba(17,17,17,0.4);">Status</div>
<div class="t" style="top:921px;font-size:11px;color:#111;font-weight:700;letter-spacing:0.833px;left:302.60px;text-shadow:0.4px 0 0 rgba(17,17,17,0.4);">Datensatz 2 von 12</div>
<div class="t" style="top:921px;font-size:11px;color:#111;font-weight:700;letter-spacing:0.952px;right:5.05px;text-align:right;text-shadow:0.4px 0 0 rgba(17,17,17,0.4);">homescreen_crm.bsc!gf_informant_1000016.</div>
</body></html>
